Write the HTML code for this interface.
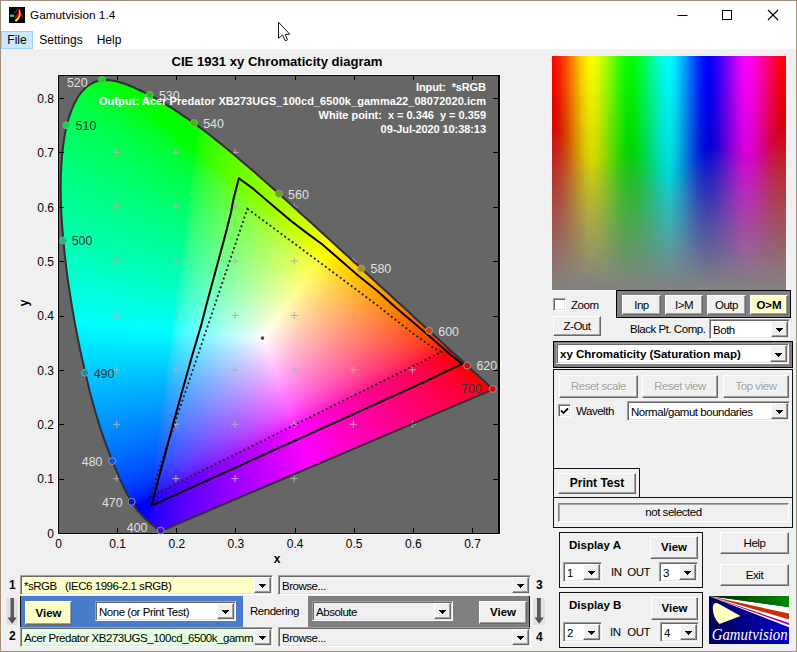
<!DOCTYPE html>
<html><head><meta charset="utf-8"><title>Gamutvision 1.4</title>
<style>
html,body{margin:0;padding:0}
body{width:797px;height:652px;overflow:hidden;background:#f0f0f0;position:relative;font-family:"Liberation Sans",sans-serif;font-size:11.5px;letter-spacing:-0.47px;color:#000}
.a{position:absolute}
#win{position:absolute;left:0;top:0;width:795px;height:650px;border:1px solid #a09078;box-sizing:content-box}
#title{position:absolute;left:1px;top:1px;width:795px;height:29px;background:#fff}
#menu{position:absolute;left:1px;top:30px;width:795px;height:19px;background:#fff}
.mi{position:absolute;top:31px;height:18px;line-height:18px;font-size:12px;box-sizing:border-box;text-align:center}
.b{position:absolute;box-sizing:border-box;background:#f0f0f0;border:1px solid;border-color:#fff #696969 #696969 #fff;box-shadow:inset -1px -1px 0 #a0a0a0;text-align:center;white-space:nowrap}
.b.y{background:#ffffc8}
.b.bold{font-weight:bold;letter-spacing:0}
.b.dis{color:#a0a0a0;text-shadow:1px 1px 0 #fff}
.s{position:absolute;box-sizing:border-box;background:#fff;border:1px solid;border-color:#a0a0a0 #fff #fff #a0a0a0;box-shadow:inset 1px 1px 0 #696969,inset -1px -1px 0 #e3e3e3;white-space:nowrap;overflow:hidden;padding-left:3px}
.s u{position:absolute;right:1px;top:1px;bottom:1px;width:17px;box-sizing:border-box;background:#f0f0f0;border:1px solid;border-color:#fff #696969 #696969 #fff;box-shadow:inset -1px -1px 0 #a0a0a0}
.s u:after{content:"";position:absolute;left:4px;top:50%;margin-top:-1px;width:7px;height:4px;background:linear-gradient(#000,#000) 0 0/7px 1px no-repeat,linear-gradient(#000,#000) 1px 1px/5px 1px no-repeat,linear-gradient(#000,#000) 2px 2px/3px 1px no-repeat,linear-gradient(#000,#000) 3px 3px/1px 1px no-repeat}
.fr{position:absolute;box-sizing:border-box;border:1px solid #111}
.t{position:absolute;white-space:nowrap}
#fill i{position:absolute;height:2px;display:block}
.wl{font-size:12.4px;fill:#e0e0e0}
.wd{font-size:12.4px;fill:#333}
.ax{font-size:12px;fill:#000}
.info{font-size:11px;font-weight:bold;fill:#fff;text-anchor:end}
svg text{letter-spacing:0}
.mi,#ttl{letter-spacing:0}
#hue i{position:absolute;left:0;width:234px;height:3px;display:block}
</style></head><body>
<div id="win"></div>
<div id="title"></div>
<div id="menu"></div>
<svg class="a" style="left:9px;top:7px" width="16" height="16" viewBox="0 0 16 16">
<rect width="16" height="16" fill="#000"/>
<path d="M5 5.500L7 5L8.500 2" stroke="#0cc" stroke-width=".7" stroke-dasharray="1 .6" fill="none"/>
<ellipse cx="3" cy="8.700" rx="2.500" ry="1.300" fill="#0cc"/><ellipse cx="3.700" cy="8.800" rx="1.400" ry=".8" fill="#999"/>
<path d="M5 10.500L8 6.500L9.500 3L10 8L8 12Z" fill="#a00000"/>
<path d="M9.500 1.500L10.200 1L12.500 6.500L14.500 11.500L12.500 9.500L11 8L8.500 12L7 13L9 8Z" fill="#f00"/>
<path d="M10.200 2L11.200 5L11.500 9L9.500 12.500L7.500 14.500L6 14L6.200 12.500L9 11L10 7Z" fill="#ff0"/>
</svg>
<div class="t" id="ttl" style="left:30px;top:7px;font-size:11.8px;line-height:16px">Gamutvision 1.4</div>
<svg class="a" style="left:670px;top:5px" width="120" height="22" viewBox="0 0 120 22">
<path d="M7.5 10.5H17.5" stroke="#000" stroke-width="1" fill="none"/>
<rect x="52.5" y="5.5" width="9" height="9" stroke="#000" stroke-width="1" fill="none"/>
<path d="M98 5L108 15M108 5L98 15" stroke="#000" stroke-width="1.1" fill="none"/>
</svg>
<div class="mi" style="left:1px;width:32px;background:#cce8ff;border:1px solid #99d1ff;line-height:16px">File</div>
<div class="mi" style="left:34px;width:54px">Settings</div>
<div class="mi" style="left:90px;width:38px">Help</div>
<svg class="a" style="left:277px;top:21px" width="14" height="21" viewBox="0 0 14 21">
<path d="M1.500 1.200L1.500 17.300L5.600 13.900L8 19.300Q9.200 20.200 10.400 19L8.300 13.400L12.700 13.200Z" fill="#fff" stroke="#181820" stroke-width="1" stroke-linejoin="round"/>
</svg>

<div class="t" id="ptitle" style="left:77px;width:400px;top:54px;text-align:center;font-weight:bold;font-size:13.1px;letter-spacing:0;line-height:16px">CIE 1931 xy Chromaticity diagram</div>
<div class="a" style="left:58px;top:75px;width:442px;height:459px;background:#666"></div>
<div id="fill"><i style="top:80px;left:94px;width:26px;background:linear-gradient(90deg,#00ff20 0px,#00ff0d 11px,#00ff00 14px,#00ff00 26px)"></i>
<i style="top:82px;left:90px;width:36px;background:linear-gradient(90deg,#00ff27 0px,#00ff11 16px,#00ff08 19px,#00ff00 20px,#00ff00 36px)"></i>
<i style="top:84px;left:86px;width:46px;background:linear-gradient(90deg,#00ff2e 0px,#00ff16 20px,#00ff05 26px,#00ff00 28px,#00ff00 46px)"></i>
<i style="top:86px;left:84px;width:52px;background:linear-gradient(90deg,#00ff32 0px,#00ff1a 22px,#00ff0b 29px,#00ff00 31px,#00ff00 52px)"></i>
<i style="top:88px;left:82px;width:59px;background:linear-gradient(90deg,#00ff35 0px,#00ff1b 26px,#00ff09 34px,#00ff00 36px,#00ff00 59px)"></i>
<i style="top:90px;left:80px;width:65px;background:linear-gradient(90deg,#00ff39 0px,#00ff20 27px,#00ff0b 38px,#00ff00 40px,#00ff00 65px)"></i>
<i style="top:92px;left:79px;width:70px;background:linear-gradient(90deg,#00ff3c 0px,#00ff1e 32px,#00ff0d 41px,#00ff00 44px,#00ff00 70px)"></i>
<i style="top:94px;left:77px;width:76px;background:linear-gradient(90deg,#00ff3f 0px,#00ff24 32px,#00ff11 44px,#00ff00 48px,#00ff00 76px)"></i>
<i style="top:96px;left:76px;width:80px;background:linear-gradient(90deg,#00ff41 0px,#00ff27 33px,#00ff12 47px,#00ff09 50px,#00ff00 52px,#00ff00 80px)"></i>
<i style="top:98px;left:75px;width:85px;background:linear-gradient(90deg,#00ff44 0px,#00ff26 37px,#00ff13 50px,#00ff06 54px,#00ff00 55px,#00ff00 85px)"></i>
<i style="top:100px;left:74px;width:89px;background:linear-gradient(90deg,#00ff46 0px,#00ff29 38px,#00ff12 54px,#00ff08 57px,#00ff00 58px,#00ff00 89px)"></i>
<i style="top:102px;left:73px;width:94px;background:linear-gradient(90deg,#00ff48 0px,#00ff2b 40px,#00ff13 57px,#00ff05 61px,#00ff00 63px,#00ff00 94px)"></i>
<i style="top:104px;left:72px;width:98px;background:linear-gradient(90deg,#00ff4b 0px,#00ff2c 42px,#00ff16 59px,#00ff08 64px,#00ff00 65px,#00ff00 98px)"></i>
<i style="top:106px;left:71px;width:102px;background:linear-gradient(90deg,#00ff4d 0px,#00ff2e 44px,#00ff15 63px,#00ff0a 67px,#00ff00 69px,#00ff00 102px)"></i>
<i style="top:108px;left:70px;width:106px;background:linear-gradient(90deg,#00ff4f 0px,#00ff31 44px,#00ff18 65px,#00ff08 71px,#00ff00 72px,#00ff00 106px)"></i>
<i style="top:110px;left:69px;width:110px;background:linear-gradient(90deg,#00ff51 0px,#00ff33 46px,#00ff19 68px,#00ff0a 74px,#00ff00 76px,#00ff00 110px)"></i>
<i style="top:112px;left:69px;width:113px;background:linear-gradient(90deg,#00ff53 0px,#00ff34 47px,#00ff1d 68px,#00ff0c 76px,#00ff00 78px,#00ff00 113px)"></i>
<i style="top:114px;left:68px;width:117px;background:linear-gradient(90deg,#00ff55 0px,#00ff35 50px,#00ff1b 73px,#00ff09 80px,#00ff00 82px,#00ff00 117px)"></i>
<i style="top:116px;left:67px;width:121px;background:linear-gradient(90deg,#00ff57 0px,#00ff38 50px,#00ff1d 75px,#00ff0b 83px,#00ff00 85px,#00ff00 121px)"></i>
<i style="top:118px;left:67px;width:124px;background:linear-gradient(90deg,#00ff58 0px,#00ff3b 49px,#00ff21 75px,#00ff0d 85px,#00ff00 88px,#00ff00 124px)"></i>
<i style="top:120px;left:66px;width:128px;background:linear-gradient(90deg,#00ff5a 0px,#00ff3d 50px,#00ff1f 80px,#00ff0b 89px,#00ff00 91px,#00ff00 128px)"></i>
<i style="top:122px;left:66px;width:131px;background:linear-gradient(90deg,#00ff5c 0px,#00ff3d 53px,#00ff21 81px,#00ff0d 91px,#00ff00 93px,#00ff00 131px)"></i>
<i style="top:124px;left:65px;width:134px;background:linear-gradient(90deg,#00ff5e 0px,#00ff3f 54px,#00ff26 81px,#00ff11 93px,#00ff00 97px,#00ff00 133px,#0cff00 134px)"></i>
<i style="top:126px;left:65px;width:137px;background:linear-gradient(90deg,#00ff5f 0px,#00ff41 54px,#00ff23 86px,#00ff0d 97px,#00ff00 99px,#00ff00 132px,#17ff00 136px,#1bff00 137px)"></i>
<i style="top:128px;left:64px;width:141px;background:linear-gradient(90deg,#00ff61 0px,#00ff42 57px,#00ff25 88px,#00ff0e 100px,#00ff00 103px,#00ff00 133px,#14ff00 136px,#24ff00 141px)"></i>
<i style="top:130px;left:64px;width:143px;background:linear-gradient(90deg,#00ff63 0px,#00ff43 58px,#00ff27 89px,#00ff10 102px,#00ff08 104px,#00ff00 105px,#00ff00 133px,#11ff00 135px,#2aff00 143px)"></i>
<i style="top:132px;left:63px;width:147px;background:linear-gradient(90deg,#00ff65 0px,#00ff43 62px,#00ff24 95px,#00ff0e 106px,#00ff00 109px,#00ff00 134px,#0cff00 135px,#23ff00 141px,#31ff00 147px)"></i>
<i style="top:134px;left:63px;width:149px;background:linear-gradient(90deg,#00ff66 0px,#00ff47 59px,#00ff2b 92px,#00ff15 106px,#00ff08 110px,#00ff00 111px,#00ff00 133px,#17ff00 137px,#34ff00 148px,#35ff00 149px)"></i>
<i style="top:136px;left:63px;width:152px;background:linear-gradient(90deg,#00ff68 0px,#00ff47 62px,#00ff2b 94px,#00ff14 109px,#00ff0a 112px,#00ff00 114px,#00ff00 133px,#14ff00 136px,#2cff00 144px,#3cff00 152px)"></i>
<i style="top:138px;left:62px;width:155px;background:linear-gradient(90deg,#00ff69 0px,#00ff49 63px,#00ff2c 97px,#00ff15 112px,#00ff07 116px,#00ff00 117px,#00ff00 134px,#11ff00 136px,#28ff00 143px,#40ff00 155px)"></i>
<i style="top:140px;left:62px;width:158px;background:linear-gradient(90deg,#00ff6b 0px,#00ff4b 63px,#00ff2c 100px,#00ff14 115px,#00ff0a 118px,#00ff02 119px,#00ff00 134px,#0dff00 135px,#24ff00 141px,#45ff00 158px)"></i>
<i style="top:142px;left:62px;width:160px;background:linear-gradient(90deg,#00ff6c 0px,#00ff4b 66px,#00ff2e 101px,#00ff15 117px,#00ff07 121px,#00ff00 122px,#00ff00 133px,#18ff00 137px,#36ff00 149px,#49ff00 160px)"></i>
<i style="top:144px;left:62px;width:163px;background:linear-gradient(90deg,#00ff6e 0px,#00ff4b 69px,#00ff2e 103px,#00ff16 119px,#00ff09 123px,#00ff00 124px,#00ff00 133px,#15ff00 136px,#31ff00 146px,#4eff00 163px)"></i>
<i style="top:146px;left:61px;width:166px;background:linear-gradient(90deg,#00ff70 0px,#00ff4d 70px,#00ff2f 106px,#00ff17 122px,#00ff06 127px,#00ff00 128px,#00ff00 134px,#11ff00 136px,#2bff00 144px,#50ff00 165px,#51ff00 166px)"></i>
<i style="top:148px;left:61px;width:169px;background:linear-gradient(90deg,#00ff71 0px,#00ff52 65px,#00ff33 105px,#00ff1a 123px,#00ff09 129px,#00ff00 130px,#00ff00 134px,#0dff00 135px,#24ff00 141px,#48ff00 159px,#56ff00 169px)"></i>
<i style="top:150px;left:61px;width:171px;background:linear-gradient(90deg,#00ff72 0px,#00ff55 63px,#00ff34 107px,#00ff1b 125px,#00ff0b 131px,#00ff00 133px,#18ff00 137px,#35ff00 148px,#59ff00 171px)"></i>
<i style="top:152px;left:61px;width:174px;background:linear-gradient(90deg,#00ff74 0px,#00ff51 73px,#00ff33 110px,#00ff1e 126px,#00ff0d 133px,#10ff00 135px,#26ff00 141px,#49ff00 159px,#5eff00 174px)"></i>
<i style="top:154px;left:61px;width:176px;background:linear-gradient(90deg,#00ff75 0px,#00ff57 66px,#00ff38 108px,#00ff1f 128px,#00ff15 133px,#11ff0f 135px,#1eff00 138px,#40ff00 153px,#61ff00 176px)"></i>
<i style="top:156px;left:60px;width:179px;background:linear-gradient(90deg,#00ff77 0px,#00ff56 72px,#00ff37 113px,#00ff1e 132px,#00ff1a 134px,#0dff18 135px,#22ff08 140px,#25ff00 141px,#47ff00 158px,#64ff00 179px)"></i>
<i style="top:158px;left:60px;width:182px;background:linear-gradient(90deg,#00ff78 0px,#00ff59 70px,#00ff38 115px,#00ff21 133px,#14ff1c 136px,#28ff0b 142px,#2dff00 144px,#51ff00 164px,#69ff00 182px)"></i>
<i style="top:160px;left:60px;width:184px;background:linear-gradient(90deg,#00ff7a 0px,#00ff59 73px,#00ff3a 115px,#00ff25 133px,#15ff20 136px,#2eff0d 144px,#32ff00 146px,#59ff00 169px,#6cff00 184px)"></i>
<i style="top:162px;left:60px;width:186px;background:linear-gradient(90deg,#00ff7b 0px,#00ff5c 71px,#00ff3c 116px,#00ff29 133px,#12ff26 135px,#2cff17 143px,#35ff0a 147px,#37ff02 148px,#60ff00 174px,#6fff00 186px)"></i>
<i style="top:164px;left:60px;width:189px;background:linear-gradient(90deg,#00ff7d 0px,#00ff5b 76px,#00ff3b 120px,#01ff2c 133px,#0dff2b 134px,#1fff25 138px,#36ff13 147px,#3dff00 151px,#67ff00 179px,#73ff00 189px)"></i>
<i style="top:166px;left:60px;width:191px;background:linear-gradient(90deg,#00ff7e 0px,#00ff5e 74px,#00ff3d 121px,#00ff31 132px,#19ff2c 136px,#34ff1c 146px,#40ff0a 152px,#42ff00 153px,#72ff00 187px,#77ff00 191px)"></i>
<i style="top:168px;left:60px;width:193px;background:linear-gradient(90deg,#00ff80 0px,#00ff5d 79px,#00ff3e 122px,#00ff34 132px,#16ff31 135px,#33ff22 145px,#42ff10 153px,#48ff00 156px,#7aff00 193px)"></i>
<i style="top:170px;left:60px;width:196px;background:linear-gradient(90deg,#00ff81 0px,#00ff60 77px,#00ff40 123px,#00ff37 132px,#0cff36 133px,#22ff30 138px,#41ff1a 152px,#4aff0a 157px,#4bff00 158px,#79ff00 192px,#7eff00 196px)"></i>
<i style="top:172px;left:59px;width:199px;background:linear-gradient(90deg,#00ff83 0px,#00ff62 78px,#00ff41 126px,#02ff3a 133px,#0eff39 134px,#26ff32 140px,#47ff19 156px,#4fff06 161px,#51ff00 162px,#81ff00 199px)"></i>
<i style="top:174px;left:59px;width:201px;background:linear-gradient(90deg,#00ff84 0px,#00ff64 78px,#00ff44 125px,#00ff3e 132px,#19ff3a 136px,#33ff2f 145px,#4bff1a 158px,#53ff09 163px,#55ff00 164px,#84ff00 201px)"></i>
<i style="top:176px;left:59px;width:204px;background:linear-gradient(90deg,#00ff86 0px,#00ff65 79px,#00ff45 127px,#00ff41 132px,#11ff3f 134px,#2dff36 142px,#4fff1b 160px,#57ff0c 165px,#5aff00 167px,#88ff00 204px)"></i>
<i style="top:178px;left:59px;width:206px;background:linear-gradient(90deg,#00ff87 0px,#00ff67 79px,#00ff45 130px,#00ff43 132px,#0cff42 133px,#22ff3d 138px,#40ff2f 151px,#57ff15 165px,#5cff09 168px,#5dff00 169px,#8bff00 206px)"></i>
<i style="top:180px;left:59px;width:208px;background:linear-gradient(90deg,#00ff88 0px,#00ff6a 77px,#00ff48 129px,#03ff46 132px,#14ff44 134px,#2eff3c 142px,#52ff23 161px,#5eff10 169px,#62ff00 172px,#8eff00 208px)"></i>
<i style="top:182px;left:59px;width:210px;background:linear-gradient(90deg,#00ff8a 0px,#00ff6a 80px,#00ff49 131px,#15ff47 134px,#2fff3f 142px,#56ff24 163px,#63ff0e 172px,#65ff00 174px,#91ff00 210px)"></i>
<i style="top:184px;left:59px;width:213px;background:linear-gradient(90deg,#00ff8b 0px,#00ff6c 80px,#00ff4c 131px,#11ff4a 133px,#28ff45 139px,#4aff34 155px,#62ff19 171px,#68ff0b 175px,#6aff00 177px,#96ff00 213px)"></i>
<i style="top:186px;left:59px;width:215px;background:linear-gradient(90deg,#00ff8d 0px,#00ff6b 85px,#00ff4e 131px,#13ff4c 133px,#2eff45 141px,#56ff2e 162px,#68ff15 175px,#6cff08 178px,#6eff00 179px,#99ff00 215px)"></i>
<i style="top:188px;left:59px;width:217px;background:linear-gradient(90deg,#00ff8e 0px,#00ff6f 81px,#00ff51 130px,#03ff50 131px,#14ff4f 133px,#2fff48 141px,#55ff33 161px,#69ff1b 175px,#70ff0b 180px,#71ff00 181px,#9cff00 217px)"></i>
<i style="top:190px;left:59px;width:219px;background:linear-gradient(90deg,#00ff90 0px,#00ff6d 89px,#00ff53 130px,#16ff51 133px,#30ff4b 141px,#59ff34 163px,#6cff1d 177px,#73ff0d 182px,#76ff00 184px,#9fff00 219px)"></i>
<i style="top:192px;left:59px;width:222px;background:linear-gradient(90deg,#00ff91 0px,#00ff72 82px,#00ff56 130px,#12ff54 132px,#2eff4e 140px,#55ff3b 160px,#70ff1e 179px,#78ff0a 185px,#79ff00 186px,#a3ff00 222px)"></i>
<i style="top:194px;left:59px;width:224px;background:linear-gradient(90deg,#00ff93 0px,#00ff71 88px,#00ff58 130px,#0dff57 131px,#23ff54 136px,#40ff4a 148px,#6aff2c 174px,#78ff15 185px,#7dff00 189px,#a7ff00 224px)"></i>
<i style="top:196px;left:59px;width:226px;background:linear-gradient(90deg,#00ff94 0px,#00ff73 88px,#00ff5b 129px,#04ff5a 130px,#15ff59 132px,#32ff52 141px,#58ff40 161px,#74ff24 181px,#7eff0f 189px,#81ff00 191px,#aaff00 226px)"></i>
<i style="top:198px;left:59px;width:228px;background:linear-gradient(90deg,#00ff95 0px,#00ff77 83px,#00ff5d 129px,#16ff5b 132px,#33ff55 141px,#5aff42 162px,#76ff27 182px,#82ff11 191px,#85ff00 194px,#adff00 228px)"></i>
<i style="top:200px;left:59px;width:231px;background:linear-gradient(90deg,#00ff97 0px,#00ff76 89px,#00ff5f 129px,#12ff5e 131px,#29ff5a 137px,#4eff4c 154px,#72ff32 178px,#82ff19 191px,#87ff09 195px,#89ff00 196px,#b1ff00 231px)"></i>
<i style="top:202px;left:59px;width:233px;background:linear-gradient(90deg,#00ff98 0px,#00ff79 87px,#00ff62 129px,#0dff61 130px,#24ff5e 135px,#45ff53 149px,#72ff36 178px,#86ff1b 193px,#8bff0c 197px,#8dff00 199px,#b5ff00 233px)"></i>
<i style="top:204px;left:60px;width:234px;background:linear-gradient(90deg,#00ff9a 0px,#00ff78 92px,#00ff64 127px,#04ff64 128px,#15ff63 130px,#30ff5d 138px,#56ff4e 157px,#7bff31 183px,#8aff19 195px,#8fff09 199px,#91ff00 200px,#b8ff00 234px)"></i>
<i style="top:206px;left:60px;width:236px;background:linear-gradient(90deg,#00ff9b 0px,#00ff7c 87px,#00ff67 127px,#16ff65 130px,#31ff5f 138px,#55ff52 156px,#7fff32 185px,#8fff18 198px,#93ff0c 201px,#94ff03 202px,#9bff00 208px,#bbff00 236px)"></i>
<i style="top:208px;left:60px;width:238px;background:linear-gradient(90deg,#00ff9c 0px,#00ff80 82px,#00ff69 127px,#12ff68 129px,#2dff63 136px,#52ff56 154px,#7fff36 185px,#91ff1c 199px,#96ff0e 203px,#98ff00 205px,#bfff00 238px)"></i>
<i style="top:210px;left:60px;width:241px;background:linear-gradient(90deg,#00ff9e 0px,#00ff7e 91px,#00ff6b 127px,#0dff6a 128px,#21ff68 132px,#40ff60 144px,#69ff4c 168px,#88ff31 191px,#97ff18 203px,#9bff0b 206px,#9cff00 207px,#c3ff00 241px)"></i>
<i style="top:212px;left:60px;width:243px;background:linear-gradient(90deg,#00ff9f 0px,#00ff82 86px,#00ff6e 126px,#1aff6b 130px,#34ff66 138px,#5eff56 160px,#86ff38 189px,#98ff1f 203px,#9eff0e 208px,#a0ff00 210px,#c7ff00 243px)"></i>
<i style="top:214px;left:60px;width:245px;background:linear-gradient(90deg,#00ffa1 0px,#00ff82 90px,#00ff70 126px,#17ff6e 129px,#37ff68 139px,#60ff58 161px,#8aff39 191px,#9dff1e 206px,#a3ff0b 211px,#a4ff00 212px,#caff00 245px)"></i>
<i style="top:216px;left:60px;width:247px;background:linear-gradient(90deg,#00ffa2 0px,#00ff86 85px,#00ff72 126px,#13ff71 128px,#2aff6d 134px,#49ff65 147px,#7fff47 182px,#99ff2c 202px,#a5ff13 212px,#a8ff00 215px,#ceff00 247px)"></i>
<i style="top:218px;left:60px;width:249px;background:linear-gradient(90deg,#00ffa4 0px,#00ff85 92px,#00ff74 126px,#0eff73 127px,#25ff71 132px,#45ff69 145px,#72ff54 172px,#95ff37 198px,#a6ff1b 212px,#abff0b 216px,#acff00 217px,#d2ff00 249px)"></i>
<i style="top:220px;left:60px;width:252px;background:linear-gradient(90deg,#00ffa5 0px,#00ff89 87px,#00ff77 125px,#05ff76 126px,#16ff75 128px,#32ff70 136px,#5cff63 157px,#92ff3f 195px,#a7ff22 212px,#aeff0e 218px,#b1ff00 220px,#d7ff00 252px)"></i>
<i style="top:222px;left:60px;width:254px;background:linear-gradient(90deg,#00ffa7 0px,#00ff88 94px,#00ff79 125px,#17ff77 128px,#33ff73 136px,#5dff65 157px,#90ff45 193px,#a9ff26 213px,#b2ff10 220px,#b4ff00 222px,#daff00 254px)"></i>
<i style="top:224px;left:61px;width:255px;background:linear-gradient(90deg,#00ffa8 0px,#00ff8b 90px,#00ff7b 124px,#13ff7a 126px,#2bff77 132px,#4eff6e 147px,#84ff52 182px,#a2ff37 205px,#b2ff1d 218px,#b7ff0d 222px,#b9ff00 224px,#deff00 255px)"></i>
<i style="top:226px;left:61px;width:257px;background:linear-gradient(90deg,#00ffaa 0px,#00ff8a 97px,#00ff7d 124px,#0eff7d 125px,#26ff7a 130px,#4bff71 145px,#7eff5a 177px,#a4ff3a 206px,#b5ff1e 220px,#bbff0a 225px,#bdff00 226px,#e2ff00 257px)"></i>
<i style="top:228px;left:61px;width:259px;background:linear-gradient(90deg,#00ffab 0px,#00ff8e 92px,#00ff80 123px,#05ff7f 124px,#16ff7e 126px,#33ff7a 134px,#61ff6c 157px,#9aff49 197px,#b3ff2b 217px,#bdff16 225px,#bfff0d 227px,#c0ff03 228px,#c8ff00 234px,#e6ff00 259px)"></i>
<i style="top:230px;left:61px;width:262px;background:linear-gradient(90deg,#00ffad 0px,#00ff8f 94px,#00ff82 123px,#18ff80 126px,#33ff7c 134px,#5dff70 154px,#98ff4f 195px,#b5ff2f 218px,#c0ff18 227px,#c4ff09 230px,#c5ff00 231px,#ebff00 262px)"></i>
<i style="top:232px;left:61px;width:264px;background:linear-gradient(90deg,#00ffae 0px,#00ff93 89px,#00ff84 123px,#13ff83 125px,#29ff80 130px,#4fff77 146px,#82ff61 178px,#aaff43 208px,#beff28 224px,#c7ff12 231px,#c8ff0d 232px,#c9ff00 233px,#efff00 264px)"></i>
<i style="top:234px;left:61px;width:266px;background:linear-gradient(90deg,#00ffb0 0px,#00ff91 99px,#00ff86 123px,#0eff86 124px,#23ff84 128px,#41ff7e 139px,#6dff6f 163px,#a3ff4e 202px,#bfff2d 224px,#c9ff18 232px,#cdff08 235px,#ceff00 236px,#f4ff00 266px)"></i>
<i style="top:236px;left:61px;width:268px;background:linear-gradient(90deg,#00ffb2 0px,#00ff92 101px,#00ff89 122px,#1cff87 126px,#39ff82 135px,#61ff77 155px,#a0ff54 199px,#beff36 222px,#ccff1e 233px,#d1ff0c 237px,#d2ff00 238px,#f8ff00 268px)"></i>
<i style="top:238px;left:62px;width:269px;background:linear-gradient(90deg,#00ffb3 0px,#00ff95 98px,#00ff8b 121px,#18ff89 124px,#34ff85 132px,#5eff7a 152px,#9bff5c 193px,#bdff3e 219px,#ceff22 233px,#d5ff0f 238px,#d7ff00 240px,#fcff00 269px)"></i>
<i style="top:240px;left:62px;width:272px;background:linear-gradient(90deg,#00ffb5 0px,#00ff94 105px,#00ff8d 121px,#14ff8c 123px,#33ff88 131px,#61ff7c 153px,#a1ff5b 197px,#c1ff3f 221px,#d4ff21 236px,#d9ff12 240px,#daff0c 241px,#dbff00 242px,#fffe00 271px,#fffc00 272px)"></i>
<i style="top:242px;left:62px;width:274px;background:linear-gradient(90deg,#00ffb6 0px,#00ff9a 95px,#00ff8f 121px,#0fff8e 122px,#27ff8c 127px,#49ff86 140px,#7aff75 168px,#aeff56 206px,#cdff35 230px,#dcff19 241px,#e1ff00 245px,#fffd00 270px,#fff800 274px)"></i>
<i style="top:244px;left:62px;width:276px;background:linear-gradient(90deg,#00ffb8 0px,#00ff9a 100px,#00ff92 120px,#17ff90 123px,#32ff8d 130px,#5aff84 148px,#96ff6a 187px,#c2ff49 220px,#d8ff2c 237px,#e2ff12 245px,#e5ff00 247px,#fffe00 268px,#fff400 276px)"></i>
<i style="top:246px;left:62px;width:278px;background:linear-gradient(90deg,#00ffb9 0px,#00ff9f 92px,#00ff94 120px,#19ff92 123px,#35ff8f 131px,#59ff87 147px,#97ff6d 187px,#c6ff4a 222px,#ddff2b 240px,#e6ff14 247px,#eaff00 250px,#fffd00 267px,#ffef00 278px)"></i>
<i style="top:248px;left:63px;width:279px;background:linear-gradient(90deg,#00ffbb 0px,#00ff9d 102px,#00ff96 119px,#0dff95 120px,#23ff94 124px,#43ff8e 135px,#72ff81 160px,#b1ff60 204px,#d3ff41 230px,#e5ff25 244px,#ecff12 249px,#efff00 251px,#fffd00 265px,#ffeb00 279px)"></i>
<i style="top:250px;left:63px;width:282px;background:linear-gradient(90deg,#00ffbc 0px,#00ffa2 94px,#00ff98 119px,#0fff98 120px,#28ff95 125px,#4aff8f 138px,#79ff81 164px,#b9ff5f 209px,#ddff3c 236px,#ecff20 248px,#f2ff0e 252px,#f3ff04 253px,#f6ff00 255px,#fffc00 264px,#ffe600 282px)"></i>
<i style="top:252px;left:63px;width:284px;background:linear-gradient(90deg,#00ffbe 0px,#00ffa2 100px,#00ff9b 118px,#1dff99 122px,#40ff94 133px,#72ff87 159px,#b7ff64 207px,#dbff44 234px,#eeff28 248px,#f6ff11 254px,#f9ff00 256px,#fffa00 264px,#ffe200 284px)"></i>
<i style="top:254px;left:63px;width:286px;background:linear-gradient(90deg,#00ffc0 0px,#00ffa2 105px,#00ff9d 118px,#19ff9b 121px,#36ff98 129px,#5eff8f 147px,#9dff77 187px,#ceff57 223px,#ebff37 244px,#f8ff1d 254px,#fcff0e 257px,#feff00 258px,#ffde00 286px)"></i>
<i style="top:256px;left:63px;width:288px;background:linear-gradient(90deg,#00ffc1 0px,#00ffa8 94px,#00ff9f 118px,#15ff9e 120px,#2eff9c 126px,#51ff95 140px,#87ff85 171px,#c8ff61 217px,#eaff40 242px,#faff26 254px,#fffd11 259px,#fffa00 261px,#ffda00 288px)"></i>
<i style="top:258px;left:64px;width:289px;background:linear-gradient(90deg,#00ffc3 0px,#00ffa6 105px,#00ffa1 117px,#0fffa1 118px,#25ff9f 122px,#4aff99 135px,#7dff8b 163px,#c0ff6b 209px,#e6ff4b 237px,#fcff2d 253px,#fff814 260px,#fff70d 261px,#fff600 262px,#ffd600 289px)"></i>
<i style="top:260px;left:64px;width:291px;background:linear-gradient(90deg,#00ffc5 0px,#00ffa8 105px,#00ffa4 116px,#18ffa2 119px,#30ffa0 125px,#57ff99 141px,#8fff88 174px,#d2ff63 221px,#f4ff41 246px,#fffc2b 256px,#fff416 262px,#fff000 265px,#ffd200 291px)"></i>
<i style="top:262px;left:64px;width:294px;background:linear-gradient(90deg,#00ffc6 0px,#00ffac 100px,#00ffa6 116px,#1affa5 119px,#37ffa1 127px,#60ff9a 145px,#a5ff81 188px,#dbff60 227px,#fdff3d 251px,#fff220 262px,#ffed0c 266px,#ffeb00 267px,#ffcd00 294px)"></i>
<i style="top:264px;left:64px;width:296px;background:linear-gradient(90deg,#00ffc8 0px,#00ffad 103px,#00ffa8 116px,#15ffa7 118px,#2fffa5 124px,#57ff9e 140px,#93ff8c 175px,#cfff6d 217px,#f5ff4e 244px,#fffc3e 253px,#ffec1d 265px,#ffe80f 268px,#ffe600 270px,#ffc900 296px)"></i>
<i style="top:266px;left:65px;width:297px;background:linear-gradient(90deg,#00ffc9 0px,#00ffaf 103px,#00ffaa 115px,#10ffaa 116px,#26ffa8 120px,#4bffa3 133px,#7eff97 160px,#caff75 211px,#f6ff54 242px,#fffd47 250px,#ffe81f 266px,#ffe30b 270px,#ffe200 271px,#ffc600 297px)"></i>
<i style="top:268px;left:65px;width:299px;background:linear-gradient(90deg,#00ffcb 0px,#00ffb1 103px,#00ffad 114px,#19ffac 117px,#34ffa9 124px,#5bffa3 140px,#9dff8f 179px,#dfff6c 225px,#fffe4f 248px,#ffe626 266px,#ffdf0f 272px,#ffdc00 274px,#ffc200 299px)"></i>
<i style="top:270px;left:65px;width:301px;background:linear-gradient(90deg,#00ffcd 0px,#00ffb2 107px,#00ffaf 114px,#14ffae 116px,#2fffac 122px,#51ffa7 135px,#85ff9a 163px,#ceff7b 212px,#ffff57 246px,#ffe32a 267px,#ffda11 274px,#ffd800 276px,#ffbe00 301px)"></i>
<i style="top:272px;left:65px;width:304px;background:linear-gradient(90deg,#00ffcf 0px,#00ffb3 110px,#00ffb1 114px,#0effb1 115px,#25ffb0 119px,#49ffab 131px,#79ffa1 155px,#c9ff82 207px,#fcff61 242px,#fff14b 254px,#ffdd28 270px,#ffd613 276px,#ffd300 279px,#ffba00 304px)"></i>
<i style="top:274px;left:66px;width:305px;background:linear-gradient(90deg,#00ffd0 0px,#00ffb7 104px,#00ffb4 113px,#10ffb3 114px,#26ffb2 118px,#45ffae 128px,#73ffa5 150px,#c4ff88 202px,#fcff66 240px,#fff151 252px,#ffd929 271px,#ffd110 278px,#ffcf00 280px,#ffb600 305px)"></i>
<i style="top:276px;left:66px;width:307px;background:linear-gradient(90deg,#00ffd2 0px,#00ffb9 105px,#00ffb6 112px,#1fffb5 116px,#3effb2 125px,#69ffaa 144px,#b4ff93 190px,#efff74 230px,#fffd67 242px,#ffd62c 272px,#ffcd13 280px,#ffcc0d 281px,#ffcb01 282px,#ffb200 307px)"></i>
<i style="top:278px;left:66px;width:309px;background:linear-gradient(90deg,#00ffd4 0px,#00ffba 109px,#00ffb9 112px,#14ffb8 114px,#2dffb6 119px,#53ffb1 133px,#88ffa6 161px,#dbff85 215px,#fffe6d 240px,#ffd432 272px,#ffc914 282px,#ffc708 284px,#ffc600 285px,#ffaf00 309px)"></i>
<i style="top:280px;left:66px;width:311px;background:linear-gradient(90deg,#00ffd6 0px,#00ffbc 110px,#00ffbb 112px,#0effbb 113px,#26ffb9 117px,#46ffb6 127px,#78ffad 151px,#d5ff8c 210px,#fffd72 239px,#ffce30 275px,#ffc516 284px,#ffc30c 286px,#ffc200 287px,#ffab00 311px)"></i>
<i style="top:282px;left:67px;width:312px;background:linear-gradient(90deg,#00ffd7 0px,#00ffbf 107px,#02ffbd 111px,#11ffbd 112px,#27ffbc 116px,#47ffb8 126px,#79ffaf 150px,#d4ff91 207px,#fffe78 236px,#ffcf39 272px,#ffc21b 284px,#ffbf0f 287px,#ffbd00 289px,#ffa800 312px)"></i>
<i style="top:284px;left:67px;width:315px;background:linear-gradient(90deg,#00ffd9 0px,#00ffc1 108px,#00ffc0 110px,#1affbf 113px,#3affbd 121px,#67ffb6 140px,#acffa4 180px,#f6ff84 228px,#fffc7b 236px,#ffce3f 271px,#ffbe1d 286px,#ffba0b 290px,#ffb900 291px,#ffa300 315px)"></i>
<i style="top:286px;left:67px;width:317px;background:linear-gradient(90deg,#00ffdb 0px,#00ffc3 110px,#15ffc2 112px,#2dffc0 117px,#50ffbc 129px,#86ffb2 156px,#dfff94 212px,#fffe83 233px,#ffcd45 270px,#ffbb21 287px,#ffb60e 292px,#ffb400 294px,#ffa000 317px)"></i>
<i style="top:288px;left:68px;width:318px;background:linear-gradient(90deg,#00ffdd 0px,#00ffc5 109px,#0fffc5 110px,#27ffc3 114px,#4affc0 125px,#80ffb7 151px,#dfff98 210px,#fffd87 231px,#ffcb49 269px,#ffb61f 289px,#ffb210 293px,#ffb000 295px,#ff9c00 318px)"></i>
<i style="top:290px;left:68px;width:320px;background:linear-gradient(90deg,#00ffdf 0px,#00ffc8 108px,#03ffc7 109px,#11ffc7 110px,#28ffc6 114px,#4bffc2 125px,#83ffb9 152px,#e3ff9b 211px,#fffd8c 230px,#ffcf55 264px,#ffb528 288px,#ffae12 295px,#ffac00 298px,#ff9800 320px)"></i>
<i style="top:292px;left:68px;width:322px;background:linear-gradient(90deg,#00ffe1 0px,#00ffca 108px,#14ffca 110px,#31ffc8 116px,#58ffc3 130px,#94ffb8 161px,#edff9b 216px,#fffe91 228px,#ffcf5b 262px,#ffb129 290px,#ffaa10 298px,#ffa800 300px,#ff9500 322px)"></i>
<i style="top:294px;left:68px;width:325px;background:linear-gradient(90deg,#00ffe3 0px,#00ffcd 108px,#16ffcc 110px,#2effcb 115px,#52ffc7 127px,#92ffbc 159px,#f6ff9c 220px,#fffd96 227px,#ffcd5e 262px,#ffae2c 291px,#ffa612 300px,#ffa403 302px,#ff9f00 308px,#ff9100 325px)"></i>
<i style="top:296px;left:69px;width:326px;background:linear-gradient(90deg,#00ffe5 0px,#00ffcf 107px,#0fffcf 108px,#23ffce 111px,#46ffcb 121px,#73ffc5 141px,#c4ffb2 187px,#fffe9b 224px,#ffd168 256px,#ffad32 289px,#ffa317 300px,#ffa009 303px,#ff9f00 304px,#ff8d00 326px)"></i>
<i style="top:298px;left:69px;width:328px;background:linear-gradient(90deg,#00ffe6 0px,#00ffd2 106px,#04ffd2 107px,#12ffd1 108px,#2dffd0 113px,#54ffcc 126px,#88ffc4 151px,#ebffa9 210px,#fffd9f 223px,#ffcb67 259px,#ffa72d 294px,#ff9e15 303px,#ff9d0c 305px,#ff9c01 306px,#ff8900 328px)"></i>
<i style="top:300px;left:69px;width:330px;background:linear-gradient(90deg,#00ffe8 0px,#00ffd4 106px,#1bffd4 109px,#39ffd2 116px,#61ffce 131px,#a4ffc2 166px,#feffa6 220px,#ffca6b 258px,#ffa531 294px,#ff9b17 305px,#ff9700 309px,#ff8600 330px)"></i>
<i style="top:302px;left:70px;width:331px;background:linear-gradient(90deg,#00ffea 0px,#00ffd7 105px,#16ffd7 107px,#30ffd5 112px,#59ffd1 126px,#9bffc7 159px,#ffffab 218px,#ffce75 252px,#ffa030 296px,#ff9718 306px,#ff940b 309px,#ff9300 310px,#ff8200 331px)"></i>
<i style="top:304px;left:70px;width:334px;background:linear-gradient(90deg,#00ffec 0px,#00ffda 105px,#10ffd9 106px,#29ffd8 110px,#50ffd5 122px,#88ffce 148px,#fcffb1 215px,#ffee9e 227px,#ffbd64 265px,#ff9a2d 300px,#ff9112 310px,#ff8f00 313px,#ff7e00 334px)"></i>
<i style="top:306px;left:70px;width:336px;background:linear-gradient(90deg,#00ffee 0px,#00ffdd 104px,#04ffdc 105px,#12ffdc 106px,#2affdb 110px,#4bffd9 120px,#7effd3 142px,#f9ffb6 212px,#fffcb1 217px,#ffcb7b 251px,#ff9831 300px,#ff8e14 312px,#ff8c0a 314px,#ff8b00 315px,#ff7a00 336px)"></i>
<i style="top:308px;left:71px;width:337px;background:linear-gradient(90deg,#00fff0 0px,#00ffdf 103px,#1cffdf 106px,#3effdd 114px,#6affd8 131px,#b3ffcc 169px,#fffdb7 214px,#ffcb80 248px,#ff9533 300px,#ff8b19 312px,#ff8706 316px,#ff8700 317px,#ff7700 337px)"></i>
<i style="top:310px;left:71px;width:339px;background:linear-gradient(90deg,#00fff3 0px,#00ffe2 103px,#17ffe1 105px,#35ffe0 111px,#60ffdd 126px,#aaffd2 163px,#fffebd 212px,#ffca84 247px,#ff9337 300px,#ff8617 315px,#ff840a 318px,#ff8300 319px,#ff7300 339px)"></i>
<i style="top:312px;left:71px;width:341px;background:linear-gradient(90deg,#00fff5 0px,#00ffe5 103px,#10ffe4 104px,#2affe4 108px,#52ffe1 120px,#87ffdb 144px,#ffffc2 210px,#ffc988 246px,#ff8d34 304px,#ff8218 317px,#ff7f05 321px,#ff7e00 323px,#ff6f00 341px)"></i>
<i style="top:314px;left:72px;width:342px;background:linear-gradient(90deg,#00fff7 0px,#00ffe8 101px,#05ffe7 102px,#13ffe7 103px,#2bffe6 107px,#4dffe4 117px,#81ffdf 139px,#feffc7 207px,#ffc88b 244px,#ff9244 295px,#ff8121 315px,#ff7c0f 321px,#ff7b00 323px,#ff6c00 342px)"></i>
<i style="top:316px;left:72px;width:345px;background:linear-gradient(90deg,#00fff9 0px,#00ffea 101px,#1dffea 104px,#3cffe8 111px,#68ffe5 127px,#baffda 168px,#fffeca 207px,#ffd39c 234px,#ff9e5c 280px,#ff822c 312px,#ff7914 322px,#ff780c 324px,#ff7703 325px,#ff7200 331px,#ff6700 345px)"></i>
<i style="top:318px;left:72px;width:347px;background:linear-gradient(90deg,#00fffb 0px,#00ffed 101px,#17ffed 103px,#32ffec 108px,#5bffe9 121px,#9affe2 150px,#ffffd0 205px,#ffd2a0 233px,#ff9f63 277px,#ff7d2b 315px,#ff7512 325px,#ff7200 328px,#ff6300 347px)"></i>
<i style="top:320px;left:73px;width:348px;background:linear-gradient(90deg,#00fffd 0px,#00fff0 100px,#11fff0 101px,#2bffef 105px,#54ffed 117px,#8dffe8 142px,#fffed4 203px,#ffcea0 233px,#ff985f 281px,#ff7a2d 315px,#ff7114 326px,#ff6f0b 328px,#ff6e01 329px,#ff5f00 348px)"></i>
<i style="top:322px;left:73px;width:350px;background:linear-gradient(90deg,#00ffff 0px,#00fff3 99px,#06fff3 100px,#14fff3 101px,#31fff2 106px,#60ffef 121px,#a3ffe8 152px,#fffdd8 202px,#ffcca2 233px,#ff9c69 275px,#ff7831 315px,#ff6d15 328px,#ff6a00 332px,#ff5b00 350px)"></i>
<i style="top:324px;left:74px;width:351px;background:linear-gradient(90deg,#00fcff 0px,#00fff9 81px,#00fff6 98px,#16fff6 100px,#32fff5 105px,#59fff3 117px,#94ffee 143px,#fffedd 199px,#ffcfaa 228px,#ff9a6c 273px,#ff7432 316px,#ff6916 329px,#ff660a 332px,#ff6600 333px,#ff5700 351px)"></i>
<i style="top:326px;left:74px;width:354px;background:linear-gradient(90deg,#00faff 0px,#00fffc 80px,#00fff9 98px,#18fff9 100px,#33fff8 105px,#55fff6 115px,#96fff1 143px,#ffffe3 197px,#ffccac 228px,#ff956b 276px,#ff7032 318px,#ff6518 331px,#ff6206 335px,#ff6100 336px,#ff5200 354px)"></i>
<i style="top:328px;left:74px;width:356px;background:linear-gradient(90deg,#00f8ff 0px,#00fffc 98px,#12fffc 99px,#2cfffb 103px,#50fffa 113px,#89fff6 136px,#fffee7 196px,#ffcdb1 226px,#ff9c78 267px,#ff6c34 319px,#ff6016 334px,#ff5e0a 337px,#ff5d00 338px,#ff4e00 356px)"></i>
<i style="top:330px;left:75px;width:357px;background:linear-gradient(90deg,#00f6ff 0px,#00ffff 96px,#06ffff 97px,#14ffff 98px,#2dfffe 102px,#4efffd 111px,#7dfffa 129px,#fffeeb 194px,#ffd0b9 221px,#ff9f81 261px,#ff6936 319px,#ff5d1a 334px,#ff590c 338px,#ff5800 340px,#ff4a00 357px)"></i>
<i style="top:332px;left:75px;width:359px;background:linear-gradient(90deg,#00f4ff 0px,#00fcff 96px,#1efcff 99px,#3ffdff 106px,#73ffff 124px,#cbfff7 166px,#fffdef 193px,#ffcdbb 221px,#ff967b 267px,#ff6435 322px,#ff5818 337px,#ff5409 341px,#ff5300 342px,#ff4500 359px)"></i>
<i style="top:334px;left:75px;width:361px;background:linear-gradient(90deg,#00f1ff 0px,#00f9ff 96px,#0ff9ff 97px,#2af9ff 101px,#4dfaff 110px,#88fdff 133px,#fefff6 190px,#ffc8ba 223px,#ff9680 265px,#ff5f34 325px,#ff5216 340px,#ff500c 343px,#ff4e00 345px,#ff4000 361px)"></i>
<i style="top:336px;left:76px;width:362px;background:linear-gradient(90deg,#00efff 0px,#00f6ff 95px,#11f6ff 96px,#26f6ff 99px,#4af7ff 108px,#83f9ff 130px,#fbfffc 186px,#fff9f5 191px,#ffcac0 219px,#ff9b8b 257px,#ff5c37 324px,#ff4e18 341px,#ff4a08 345px,#ff4900 346px,#ff3b00 362px)"></i>
<i style="top:338px;left:76px;width:365px;background:linear-gradient(90deg,#00edff 0px,#00f3ff 94px,#06f3ff 95px,#14f3ff 96px,#2cf3ff 100px,#4df4ff 109px,#83f6ff 130px,#fffcfd 188px,#ffcdc9 215px,#ff9d92 253px,#ff6146 315px,#ff4c20 340px,#ff460b 347px,#ff4400 349px,#ff3500 365px)"></i>
<i style="top:340px;left:77px;width:366px;background:linear-gradient(90deg,#00ebff 0px,#00f0ff 93px,#16f0ff 95px,#32f0ff 100px,#64f1ff 116px,#c9f6ff 162px,#fff9ff 187px,#ffcaca 214px,#ff9790 255px,#ff5338 327px,#ff4317 345px,#ff4008 349px,#ff3f00 350px,#ff2f00 366px)"></i>
<i style="top:342px;left:77px;width:368px;background:linear-gradient(90deg,#00e9ff 0px,#00edff 93px,#0fedff 94px,#2aedff 98px,#54eeff 110px,#96f0ff 138px,#fff4fe 188px,#ffc8cc 214px,#ff9996 251px,#ff5948 317px,#ff4221 343px,#ff3b0f 350px,#ff3901 352px,#ff2800 368px)"></i>
<i style="top:344px;left:77px;width:370px;background:linear-gradient(90deg,#00e7ff 0px,#00eaff 93px,#11eaff 94px,#2beaff 98px,#54ebff 110px,#93ecff 137px,#ffeffd 189px,#ffbcc4 220px,#ff8888 264px,#ff4633 335px,#ff3714 351px,#ff3200 355px,#ff2000 370px)"></i>
<i style="top:346px;left:78px;width:371px;background:linear-gradient(90deg,#00e5ff 0px,#00e7ff 91px,#07e7ff 92px,#14e7ff 93px,#30e7ff 98px,#5fe8ff 113px,#b4eaff 152px,#ffeafd 189px,#ffbbc7 218px,#ff868a 263px,#ff4133 336px,#ff3218 351px,#ff2d0a 355px,#ff2c00 356px,#ff1700 371px)"></i>
<i style="top:348px;left:78px;width:374px;background:linear-gradient(90deg,#00e3ff 0px,#00e4ff 91px,#16e4ff 93px,#31e4ff 98px,#5ae5ff 111px,#a9e6ff 147px,#ffe7ff 189px,#ffbbcc 216px,#ff8892 258px,#ff3b32 339px,#ff2a16 354px,#ff2506 358px,#ff2400 359px,#ff0d00 371px,#ff0000 374px)"></i>
<i style="top:350px;left:79px;width:375px;background:linear-gradient(90deg,#00e0ff 0px,#00e1ff 90px,#18e1ff 92px,#35e1ff 98px,#5fe2ff 112px,#ace2ff 148px,#ffe3fe 189px,#ffb4c9 218px,#ff7f8b 264px,#ff3634 339px,#ff2217 355px,#ff1c09 359px,#ff1b00 360px,#ff0a00 367px,#ff0000 369px,#ff0000 375px)"></i>
<i style="top:352px;left:79px;width:377px;background:linear-gradient(90deg,#00deff 0px,#00dfff 90px,#11dfff 91px,#2adfff 95px,#4cdfff 105px,#81dfff 127px,#ffdefd 190px,#ffadc6 221px,#ff7b8c 265px,#ff2e33 342px,#ff1716 358px,#ff0a00 363px,#ff0000 365px,#ff0000 377px)"></i>
<i style="top:354px;left:80px;width:378px;background:linear-gradient(90deg,#00dcff 0px,#00dcff 88px,#21dcff 92px,#41dcff 100px,#78dcff 122px,#ffd9fd 190px,#ffacc9 219px,#ff768b 266px,#ff2a36 341px,#ff101e 356px,#ff0014 360px,#ff0008 363px,#ff0000 364px,#ff0000 378px)"></i>
<i style="top:356px;left:80px;width:380px;background:linear-gradient(90deg,#00daff 0px,#00d9ff 88px,#1cd9ff 91px,#37d9ff 97px,#5fd9ff 111px,#a7d8ff 145px,#ffd6fe 190px,#ffa5c6 222px,#ff6e87 271px,#ff2a3e 337px,#ff132a 351px,#ff0022 356px,#ff000f 364px,#ff0000 367px,#ff0000 380px)"></i>
<i style="top:358px;left:80px;width:383px;background:linear-gradient(90deg,#00d8ff 0px,#00d6ff 88px,#17d6ff 90px,#34d6ff 96px,#5dd6ff 110px,#b2d4ff 151px,#ffd1fe 191px,#ffa4c9 221px,#ff7190 265px,#ff2944 334px,#ff1032 348px,#ff002c 352px,#ff0014 365px,#ff0008 368px,#ff0000 369px,#ff0000 383px)"></i>
<i style="top:360px;left:81px;width:384px;background:linear-gradient(90deg,#00d6ff 0px,#00d4ff 87px,#11d4ff 88px,#29d3ff 92px,#4ed3ff 103px,#8cd2ff 131px,#ffccfd 191px,#ff9dc6 223px,#ff698c 269px,#ff2c4d 327px,#ff133c 342px,#ff0035 347px,#ff001a 364px,#ff000a 369px,#ff0000 371px,#ff0000 384px)"></i>
<i style="top:362px;left:81px;width:386px;background:linear-gradient(90deg,#00d4ff 0px,#00d1ff 86px,#1ad1ff 89px,#36d1ff 95px,#64d0ff 112px,#bacdff 155px,#ffc9ff 191px,#ff9ecc 220px,#ff6991 266px,#ff2b53 324px,#ff1042 339px,#ff003d 343px,#ff001d 365px,#ff000c 371px,#ff0000 373px,#ff0000 386px)"></i>
<i style="top:364px;left:82px;width:387px;background:linear-gradient(90deg,#00d2ff 0px,#00ceff 85px,#1cceff 88px,#3aceff 95px,#66cdff 112px,#bdc9ff 156px,#ffc4fe 191px,#ff95c6 224px,#ff5b86 276px,#ff2756 322px,#ff1049 334px,#ff0947 336px,#ff0145 337px,#ff0023 363px,#ff000e 372px,#ff0001 374px,#ff0000 387px)"></i>
<i style="top:366px;left:82px;width:389px;background:linear-gradient(90deg,#00d0ff 0px,#00ccff 85px,#17ccff 87px,#30cbff 92px,#5bcaff 107px,#b3c6ff 151px,#ffc0fe 192px,#ff93c9 223px,#ff5b8b 273px,#ff265b 319px,#ff104f 330px,#ff094d 332px,#ff004c 333px,#ff0025 364px,#ff0010 374px,#ff0000 377px,#ff0000 389px)"></i>
<i style="top:368px;left:83px;width:390px;background:linear-gradient(90deg,#00ceff 0px,#00c9ff 84px,#11c9ff 85px,#28c9ff 89px,#49c8ff 99px,#79c6ff 120px,#ffbbfd 192px,#ff8dc8 224px,#ff588e 271px,#ff2963 312px,#ff1056 325px,#ff0954 327px,#ff0053 328px,#ff0026 365px,#ff000e 376px,#ff0000 378px,#ff0000 390px)"></i>
<i style="top:370px;left:83px;width:393px;background:linear-gradient(90deg,#00ccff 0px,#00c6ff 83px,#1ac6ff 86px,#38c6ff 93px,#64c4ff 110px,#b9bfff 154px,#ffb6fd 193px,#ff89c8 225px,#ff518b 275px,#ff2365 312px,#ff0d5b 322px,#ff0059 324px,#ff002b 364px,#ff0012 377px,#ff0000 381px,#ff0000 393px)"></i>
<i style="top:372px;left:84px;width:394px;background:linear-gradient(90deg,#00caff 0px,#00c4ff 82px,#15c4ff 84px,#32c3ff 90px,#5bc2ff 105px,#9fbdff 139px,#ffb3fe 192px,#ff87cb 223px,#ff5090 271px,#ff256c 306px,#ff0d61 317px,#ff005f 319px,#ff002d 364px,#ff0013 378px,#ff0009 381px,#ff0000 382px,#ff0000 394px)"></i>
<i style="top:374px;left:84px;width:396px;background:linear-gradient(90deg,#00c8ff 0px,#00c1ff 82px,#17c1ff 84px,#32c0ff 90px,#59bfff 104px,#9bbaff 137px,#ffaefe 193px,#ff83cb 224px,#ff4f94 269px,#ff2571 302px,#ff0d67 313px,#ff0065 315px,#ff002c 367px,#ff0012 381px,#ff0000 385px,#ff0000 396px)"></i>
<i style="top:376px;left:85px;width:397px;background:linear-gradient(90deg,#00c6ff 0px,#00bfff 81px,#11bfff 82px,#2cbeff 87px,#52bcff 100px,#8cb8ff 128px,#ffabff 192px,#ff7ecb 224px,#ff4691 272px,#ff2275 299px,#ff0d6c 308px,#ff006a 310px,#ff002f 366px,#ff0013 382px,#ff0008 385px,#ff0000 386px,#ff0000 397px)"></i>
<i style="top:378px;left:85px;width:399px;background:linear-gradient(90deg,#00c4ff 0px,#00bcff 80px,#1abcff 83px,#3abbff 91px,#64b9ff 108px,#b1b1ff 149px,#ffa4fd 194px,#ff7acb 225px,#ff3f8f 275px,#ff1c78 298px,#ff0d72 304px,#ff0070 306px,#ff0032 366px,#ff0016 383px,#ff000a 387px,#ff0000 389px,#ff0000 399px)"></i>
<i style="top:380px;left:86px;width:401px;background:linear-gradient(90deg,#00c1ff 0px,#00baff 79px,#15b9ff 81px,#31b9ff 87px,#5cb6ff 103px,#adafff 146px,#ffa1fe 193px,#ff75cb 225px,#ff3b92 273px,#ff1b7c 294px,#ff0876 300px,#ff0075 301px,#ff0036 364px,#ff0019 383px,#ff000c 388px,#ff0000 390px,#ff0000 401px)"></i>
<i style="top:382px;left:86px;width:403px;background:linear-gradient(90deg,#00bfff 0px,#00b7ff 79px,#0eb7ff 80px,#26b6ff 84px,#49b5ff 95px,#8bafff 127px,#ff9dff 193px,#ff6ec8 228px,#ff2b8b 281px,#ff137f 293px,#ff007b 297px,#ff0035 367px,#ff0018 386px,#ff000a 391px,#ff0000 393px,#ff0000 403px)"></i>
<i style="top:384px;left:86px;width:405px;background:linear-gradient(90deg,#00bdff 0px,#00b5ff 79px,#10b4ff 80px,#27b4ff 84px,#4eb2ff 97px,#90acff 130px,#ff99ff 194px,#ff6ccb 227px,#ff2e93 275px,#ff1685 288px,#ff0781 292px,#ff0081 293px,#ff0033 371px,#ff0015 390px,#ff0007 394px,#ff0000 395px,#ff0000 405px)"></i>
<i style="top:386px;left:87px;width:406px;background:linear-gradient(90deg,#00bbff 0px,#00b2ff 77px,#1fb2ff 81px,#42b0ff 91px,#76acff 115px,#fc95ff 192px,#ff85ed 204px,#ff54b8 242px,#ff2592 276px,#ff1089 285px,#ff0086 288px,#ff0032 373px,#ff0016 391px,#ff0009 395px,#ff0001 396px,#ff0000 406px)"></i>
<i style="top:388px;left:88px;width:406px;background:linear-gradient(90deg,#00b9ff 0px,#00b0ff 76px,#1bafff 79px,#36aeff 86px,#5eabff 102px,#a4a2ff 140px,#fe8fff 193px,#ff5dc6 231px,#ff2799 270px,#ff108e 280px,#ff008b 283px,#ff0036 371px,#ff0017 392px,#ff0006 397px,#ff0000 398px,#ff0000 406px)"></i>
<i style="top:390px;left:88px;width:405px;background:linear-gradient(90deg,#00b7ff 0px,#00adff 76px,#0eadff 77px,#25acff 81px,#45aaff 91px,#7fa5ff 119px,#f88dff 190px,#ff88fc 196px,#ff57c6 232px,#ff299f 265px,#ff1395 275px,#ff0091 279px,#ff0035 374px,#ff0017 394px,#ff0009 399px,#ff0000 400px,#ff0000 405px)"></i>
<i style="top:392px;left:89px;width:399px;background:linear-gradient(90deg,#00b5ff 0px,#00abff 75px,#10aaff 76px,#26aaff 80px,#4da7ff 93px,#8da0ff 126px,#fc87ff 192px,#ff80f8 198px,#ff4ec2 235px,#ff22a1 264px,#ff0c98 272px,#ff0096 274px,#ff0033 377px,#ff0016 396px,#ff000e 399px)"></i>
<i style="top:394px;left:89px;width:394px;background:linear-gradient(90deg,#00b3ff 0px,#00a8ff 74px,#19a8ff 77px,#38a6ff 85px,#5ea3ff 101px,#a199ff 138px,#fe81ff 194px,#ff4cc6 233px,#ff24a8 259px,#ff109f 267px,#ff009c 270px,#ff0031 381px,#ff001e 394px)"></i>
<i style="top:396px;left:90px;width:389px;background:linear-gradient(90deg,#00b1ff 0px,#00a6ff 73px,#14a5ff 75px,#2fa4ff 81px,#56a1ff 96px,#9598ff 130px,#f480ff 188px,#ff7afc 196px,#ff46c6 233px,#ff20ab 256px,#ff0ca4 263px,#ff00a1 265px,#ff0030 383px,#ff0028 389px)"></i>
<i style="top:398px;left:90px;width:384px;background:linear-gradient(90deg,#00afff 0px,#00a3ff 73px,#0ea3ff 74px,#25a2ff 78px,#49a0ff 90px,#8298ff 119px,#e580ff 180px,#ff76fd 196px,#ff3ec5 235px,#ff1caf 254px,#ff0ca9 259px,#ff00a7 261px,#ff0031 384px)"></i>
<i style="top:400px;left:91px;width:378px;background:linear-gradient(90deg,#00adff 0px,#02a1ff 72px,#10a1ff 73px,#26a0ff 77px,#499dff 89px,#8095ff 117px,#df7eff 176px,#ff70fd 196px,#ff3dca 231px,#ff1cb4 249px,#ff0caf 254px,#ff00ad 256px,#ff006b 324px,#ff0039 378px)"></i>
<i style="top:402px;left:91px;width:373px;background:linear-gradient(90deg,#00abff 0px,#009fff 71px,#199eff 74px,#379cff 82px,#6397ff 101px,#ba85ff 153px,#ff6cfe 196px,#ff34c9 233px,#ff1ab9 246px,#ff0bb5 250px,#ff00b2 252px,#ff006a 327px,#ff0041 373px)"></i>
<i style="top:404px;left:92px;width:368px;background:linear-gradient(90deg,#00a9ff 0px,#009cff 70px,#149cff 72px,#329aff 79px,#5f95ff 98px,#b084ff 146px,#f66bff 190px,#ff66fe 196px,#ff2eca 232px,#ff14bd 243px,#ff00b8 247px,#ff006f 322px,#ff0046 368px)"></i>
<i style="top:406px;left:92px;width:363px;background:linear-gradient(90deg,#00a7ff 0px,#009aff 70px,#0e99ff 71px,#2498ff 75px,#4596ff 86px,#778eff 111px,#d076ff 167px,#ff60fd 197px,#ff2ace 230px,#ff14c3 239px,#ff0bc0 241px,#ff01bf 242px,#ff007c 309px,#ff004d 363px)"></i>
<i style="top:408px;left:93px;width:357px;background:linear-gradient(90deg,#00a5ff 0px,#0097ff 68px,#0397ff 69px,#1097ff 70px,#2996ff 75px,#4a92ff 87px,#8189ff 116px,#d76fff 171px,#ff5afd 197px,#ff27d2 227px,#ff10c8 235px,#ff0bc6 236px,#ff00c5 237px,#ff008a 294px,#ff0053 357px)"></i>
<i style="top:410px;left:93px;width:353px;background:linear-gradient(90deg,#00a3ff 0px,#0095ff 68px,#1894ff 71px,#3093ff 77px,#578eff 93px,#9980ff 131px,#de67ff 176px,#ff53fd 198px,#ff25d7 224px,#ff10ce 231px,#ff0bcd 232px,#ff00cb 233px,#ff0085 301px,#ff0059 353px)"></i>
<i style="top:412px;left:94px;width:347px;background:linear-gradient(90deg,#00a1ff 0px,#0092ff 67px,#1492ff 69px,#2e90ff 75px,#558cff 91px,#947eff 127px,#dd63ff 175px,#ff4efe 197px,#ff23dc 220px,#ff10d4 226px,#ff0bd3 227px,#ff00d2 228px,#ff009b 278px,#ff005e 347px)"></i>
<i style="top:414px;left:95px;width:341px;background:linear-gradient(90deg,#009eff 0px,#0090ff 66px,#0e90ff 67px,#248fff 71px,#498bff 84px,#8280ff 115px,#d363ff 168px,#ff46fd 197px,#ff1ee0 217px,#ff0bd9 222px,#ff00d8 223px,#ff009e 275px,#ff0064 341px)"></i>
<i style="top:416px;left:95px;width:337px;background:linear-gradient(90deg,#009cff 0px,#008eff 65px,#038dff 66px,#108dff 67px,#288cff 72px,#4988ff 84px,#7d7eff 112px,#c963ff 162px,#fb45ff 194px,#ff37f7 202px,#ff18e4 215px,#ff0ae0 218px,#ff00de 219px,#ff00a5 269px,#ff0069 337px)"></i>
<i style="top:418px;left:96px;width:331px;background:linear-gradient(90deg,#009aff 0px,#008bff 64px,#188aff 67px,#3588ff 75px,#5a83ff 91px,#a26fff 135px,#de53ff 175px,#ff38fe 197px,#ff18eb 210px,#ff0ae6 213px,#ff00e5 214px,#ff00b0 259px,#ff006f 331px)"></i>
<i style="top:420px;left:96px;width:326px;background:linear-gradient(90deg,#0098ff 0px,#0089ff 64px,#1388ff 66px,#2d86ff 72px,#5481ff 88px,#9172ff 124px,#cf56ff 166px,#f43cff 190px,#ff2cfc 199px,#ff14f0 207px,#ff0aed 209px,#ff00ec 210px,#ff00b6 254px,#ff0074 326px)"></i>
<i style="top:422px;left:97px;width:321px;background:linear-gradient(90deg,#0096ff 0px,#0086ff 63px,#0e86ff 64px,#2784ff 69px,#4c80ff 83px,#8672ff 116px,#c955ff 161px,#ed3bff 185px,#ff22fd 198px,#ff10f6 203px,#ff00f3 205px,#ff00bf 246px,#ff0081 311px,#ff0079 321px)"></i>
<i style="top:424px;left:98px;width:315px;background:linear-gradient(90deg,#0094ff 0px,#0084ff 61px,#0484ff 62px,#1083ff 63px,#2882ff 68px,#507cff 84px,#896eff 117px,#c651ff 159px,#e937ff 182px,#fb1fff 194px,#ff10fd 198px,#ff00fa 200px,#ff00c7 239px,#ff0091 293px,#ff007f 315px)"></i>
<i style="top:426px;left:98px;width:310px;background:linear-gradient(90deg,#0092ff 0px,#0082ff 61px,#1881ff 64px,#357eff 72px,#6775ff 96px,#b656ff 148px,#dc3cff 174px,#f221ff 189px,#fa10ff 194px,#fd00ff 196px,#ff00be 248px,#ff0084 310px)"></i>
<i style="top:428px;left:99px;width:305px;background:linear-gradient(90deg,#008fff 0px,#007fff 60px,#137eff 62px,#297dff 67px,#4c77ff 81px,#7f6aff 110px,#b850ff 149px,#dc34ff 174px,#f018ff 187px,#f409ff 190px,#f600ff 191px,#ff00fc 199px,#ff00c7 240px,#ff008a 303px,#ff0089 305px)"></i>
<i style="top:430px;left:100px;width:299px;background:linear-gradient(90deg,#008dff 0px,#007dff 59px,#0e7cff 60px,#237bff 64px,#4476ff 76px,#746bff 102px,#b94bff 149px,#da2eff 172px,#e917ff 182px,#ed08ff 185px,#ef00ff 186px,#ff00fd 198px,#ff00c7 240px,#ff008e 299px)"></i>
<i style="top:432px;left:100px;width:294px;background:linear-gradient(90deg,#008bff 0px,#007aff 58px,#047aff 59px,#107aff 60px,#2778ff 65px,#4973ff 78px,#8263ff 111px,#bb44ff 151px,#d828ff 171px,#e313ff 179px,#e800ff 182px,#ff00fd 199px,#ff00c8 240px,#ff0094 294px)"></i>
<i style="top:434px;left:101px;width:289px;background:linear-gradient(90deg,#0089ff 0px,#0078ff 57px,#1777ff 60px,#2e74ff 66px,#576dff 84px,#9954ff 126px,#c239ff 155px,#d71fff 170px,#de0eff 175px,#e100ff 177px,#ff00fe 198px,#ff00cd 236px,#ff0098 289px)"></i>
<i style="top:436px;left:102px;width:283px;background:linear-gradient(90deg,#0087ff 0px,#0075ff 56px,#1375ff 58px,#2f72ff 65px,#576aff 83px,#9951ff 125px,#c034ff 153px,#d21cff 166px,#d80dff 170px,#db00ff 172px,#ff00fe 198px,#ff00cd 236px,#ff009e 283px)"></i>
<i style="top:438px;left:102px;width:278px;background:linear-gradient(90deg,#0085ff 0px,#0073ff 56px,#0e72ff 57px,#2670ff 62px,#496aff 76px,#7a5bff 104px,#ab40ff 138px,#c328ff 156px,#d012ff 165px,#d400ff 168px,#ff00fd 199px,#ff00c6 243px,#ff00a4 278px)"></i>
<i style="top:440px;left:103px;width:272px;background:linear-gradient(90deg,#0082ff 0px,#0071ff 54px,#0470ff 55px,#1070ff 56px,#2a6dff 62px,#5066ff 78px,#8e4eff 117px,#b433ff 144px,#c718ff 158px,#cb0dff 161px,#ce00ff 163px,#ff00fd 199px,#ff00c6 243px,#ff00a9 272px)"></i>
<i style="top:442px;left:104px;width:267px;background:linear-gradient(90deg,#0080ff 0px,#006eff 53px,#176dff 56px,#3369ff 64px,#5d5fff 84px,#9943ff 124px,#b629ff 145px,#c411ff 155px,#c800ff 158px,#ff00fe 198px,#ff00cc 238px,#ff00ae 267px)"></i>
<i style="top:444px;left:104px;width:262px;background:linear-gradient(90deg,#007eff 0px,#006bff 53px,#136bff 55px,#2b68ff 61px,#5060ff 77px,#8b47ff 114px,#ad2cff 139px,#bc14ff 150px,#bf0cff 152px,#c200ff 154px,#ff00fd 199px,#ff00c4 246px,#ff00b4 262px)"></i>
<i style="top:446px;left:105px;width:256px;background:linear-gradient(90deg,#007bff 0px,#0069ff 52px,#0e68ff 53px,#2266ff 57px,#4261ff 69px,#754fff 98px,#a231ff 130px,#b517ff 144px,#b90bff 147px,#bc00ff 149px,#ff00fd 199px,#ff00c5 245px,#ff00ba 256px)"></i>
<i style="top:448px;left:106px;width:251px;background:linear-gradient(90deg,#0079ff 0px,#0066ff 50px,#1b65ff 54px,#3c5fff 65px,#6a51ff 90px,#9a33ff 123px,#ac1cff 137px,#b30bff 142px,#b402ff 143px,#ff00fd 199px,#ff00cc 239px,#ff00bf 251px)"></i>
<i style="top:450px;left:107px;width:245px;background:linear-gradient(90deg,#0076ff 0px,#0064ff 49px,#1762ff 52px,#325eff 60px,#5854ff 78px,#8d38ff 113px,#a51dff 131px,#ad0bff 137px,#af00ff 138px,#ff00fe 198px,#ff00cc 239px,#ff00c5 245px)"></i>
<i style="top:452px;left:107px;width:240px;background:linear-gradient(90deg,#0074ff 0px,#0061ff 49px,#1360ff 51px,#2b5dff 57px,#5154ff 74px,#8836ff 110px,#a11bff 128px,#a80aff 133px,#a900ff 134px,#ff00fd 199px,#ff00cc 240px)"></i>
<i style="top:454px;left:108px;width:235px;background:linear-gradient(90deg,#0072ff 0px,#005eff 48px,#0d5eff 49px,#215cff 53px,#3f56ff 64px,#6d44ff 90px,#9029ff 115px,#9e15ff 125px,#a20aff 128px,#a300ff 129px,#ff00fd 199px,#ff00d1 235px)"></i>
<i style="top:456px;left:109px;width:229px;background:linear-gradient(90deg,#006fff 0px,#005cff 46px,#1a5aff 50px,#3456ff 58px,#5f47ff 80px,#8b29ff 110px,#9a12ff 121px,#9c09ff 123px,#9e00ff 124px,#ff00fe 198px,#ff00d8 229px)"></i>
<i style="top:458px;left:110px;width:223px;background:linear-gradient(90deg,#006dff 0px,#0059ff 45px,#1758ff 48px,#3752ff 58px,#6441ff 82px,#8627ff 106px,#9412ff 116px,#9709ff 118px,#9800ff 119px,#ff00fe 198px,#ff00de 223px)"></i>
<i style="top:460px;left:111px;width:218px;background:linear-gradient(90deg,#006aff 0px,#0056ff 44px,#1355ff 46px,#3051ff 54px,#5c41ff 76px,#8225ff 102px,#900eff 112px,#9200ff 114px,#ff00fd 198px,#ff00e4 218px)"></i>
<i style="top:462px;left:111px;width:213px;background:linear-gradient(90deg,#0068ff 0px,#0053ff 44px,#0d53ff 45px,#2150ff 49px,#4049ff 61px,#6d32ff 87px,#831bff 103px,#8a0dff 108px,#8d00ff 110px,#ff00fd 199px,#ff00eb 213px)"></i>
<i style="top:464px;left:112px;width:207px;background:linear-gradient(90deg,#0065ff 0px,#0051ff 42px,#1a4fff 46px,#3848ff 56px,#6434ff 80px,#7e1bff 98px,#850dff 103px,#8700ff 105px,#ff00fe 198px,#ff00f2 207px)"></i>
<i style="top:466px;left:113px;width:202px;background:linear-gradient(90deg,#0062ff 0px,#004eff 41px,#164cff 44px,#2c48ff 50px,#523aff 68px,#7222ff 89px,#7f0dff 98px,#8200ff 100px,#ff00fe 198px,#ff00f8 202px)"></i>
<i style="top:468px;left:114px;width:196px;background:linear-gradient(90deg,#005fff 0px,#004bff 40px,#124aff 42px,#2946ff 48px,#4d39ff 64px,#701eff 86px,#790cff 93px,#7c00ff 95px,#fe00ff 196px)"></i>
<i style="top:470px;left:115px;width:190px;background:linear-gradient(90deg,#005dff 0px,#0048ff 39px,#0d47ff 40px,#2144ff 44px,#413aff 57px,#6721ff 79px,#7210ff 87px,#7600ff 90px,#f600ff 190px)"></i>
<i style="top:472px;left:115px;width:185px;background:linear-gradient(90deg,#005aff 0px,#0045ff 38px,#1a42ff 42px,#373aff 52px,#6121ff 75px,#6e0cff 84px,#7100ff 86px,#ef00ff 185px)"></i>
<i style="top:474px;left:116px;width:180px;background:linear-gradient(90deg,#0057ff 0px,#0042ff 37px,#163fff 40px,#3039ff 48px,#5625ff 67px,#670fff 78px,#6b00ff 81px,#d600ff 165px,#e900ff 180px)"></i>
<i style="top:476px;left:117px;width:174px;background:linear-gradient(90deg,#0054ff 0px,#003eff 36px,#123dff 38px,#2938ff 44px,#5123ff 63px,#610fff 73px,#6500ff 76px,#b300ff 136px,#e200ff 174px)"></i>
<i style="top:478px;left:118px;width:168px;background:linear-gradient(90deg,#0051ff 0px,#003bff 35px,#0d3aff 36px,#2436ff 41px,#4824ff 57px,#5b0fff 68px,#5f00ff 71px,#a400ff 123px,#db00ff 168px)"></i>
<i style="top:480px;left:119px;width:163px;background:linear-gradient(90deg,#004eff 0px,#0038ff 33px,#1934ff 37px,#342bff 46px,#5114ff 61px,#5805ff 65px,#5b00ff 67px,#a100ff 120px,#d500ff 163px)"></i>
<i style="top:482px;left:120px;width:157px;background:linear-gradient(90deg,#004aff 0px,#0034ff 32px,#1631ff 35px,#3028ff 43px,#4a14ff 56px,#5300ff 61px,#8d00ff 103px,#cf00ff 157px)"></i>
<i style="top:484px;left:121px;width:151px;background:linear-gradient(90deg,#0047ff 0px,#0030ff 31px,#122eff 33px,#2e24ff 41px,#4511ff 52px,#4c00ff 56px,#7f00ff 91px,#c800ff 151px)"></i>
<i style="top:486px;left:122px;width:146px;background:linear-gradient(90deg,#0043ff 0px,#002bff 30px,#0d2aff 31px,#2324ff 36px,#400eff 48px,#4500ff 51px,#7200ff 80px,#c300ff 146px)"></i>
<i style="top:488px;left:123px;width:140px;background:linear-gradient(90deg,#0040ff 0px,#0027ff 28px,#1922ff 32px,#3610ff 42px,#3e00ff 46px,#6b00ff 74px,#bc00ff 140px)"></i>
<i style="top:490px;left:124px;width:134px;background:linear-gradient(90deg,#003cff 0px,#0022ff 27px,#161eff 30px,#2f0dff 38px,#3600ff 41px,#6000ff 65px,#b100ff 130px,#b600ff 134px)"></i>
<i style="top:492px;left:125px;width:129px;background:linear-gradient(90deg,#0037ff 0px,#001fff 24px,#001cff 26px,#1218ff 28px,#2809ff 34px,#2b00ff 35px,#4f00ff 53px,#8700ff 94px,#b100ff 129px)"></i>
<i style="top:494px;left:126px;width:123px;background:linear-gradient(90deg,#0033ff 0px,#001aff 22px,#0014ff 25px,#0d12ff 26px,#1c09ff 29px,#2000ff 30px,#4100ff 44px,#7400ff 78px,#ab00ff 123px)"></i>
<i style="top:496px;left:127px;width:117px;background:linear-gradient(90deg,#002eff 0px,#0018ff 18px,#000cff 23px,#0f00ff 25px,#2600ff 31px,#4800ff 47px,#7c00ff 83px,#a500ff 117px)"></i>
<i style="top:498px;left:128px;width:112px;background:linear-gradient(90deg,#0029ff 0px,#0012ff 16px,#0008ff 19px,#0000ff 20px,#0000ff 22px,#1600ff 25px,#3100ff 34px,#5700ff 55px,#9600ff 104px,#a000ff 112px)"></i>
<i style="top:500px;left:129px;width:106px;background:linear-gradient(90deg,#0023ff 0px,#000fff 12px,#0008ff 14px,#0000ff 15px,#0000ff 21px,#1200ff 23px,#2d00ff 31px,#5100ff 50px,#8f00ff 97px,#9900ff 106px)"></i>
<i style="top:502px;left:130px;width:100px;background:linear-gradient(90deg,#001cff 0px,#000cff 8px,#0000ff 10px,#0000ff 20px,#0d00ff 21px,#1f00ff 25px,#3c00ff 37px,#6700ff 64px,#9300ff 100px)"></i>
<i style="top:504px;left:132px;width:93px;background:linear-gradient(90deg,#0011ff 0px,#0007ff 3px,#0000ff 4px,#0000ff 17px,#1900ff 21px,#3700ff 32px,#6400ff 60px,#8d00ff 93px)"></i>
<i style="top:506px;left:133px;width:88px;background:linear-gradient(90deg,#0000ff 0px,#0000ff 16px,#1500ff 19px,#2c00ff 26px,#5300ff 47px,#8800ff 88px)"></i>
<i style="top:508px;left:134px;width:82px;background:linear-gradient(90deg,#0000ff 0px,#0000ff 15px,#1200ff 17px,#2c00ff 25px,#5000ff 44px,#8200ff 82px)"></i>
<i style="top:510px;left:136px;width:75px;background:linear-gradient(90deg,#0000ff 0px,#0000ff 13px,#0d00ff 14px,#1f00ff 18px,#3e00ff 31px,#7000ff 65px,#7c00ff 75px)"></i>
<i style="top:512px;left:137px;width:70px;background:linear-gradient(90deg,#0000ff 0px,#0000ff 11px,#1900ff 15px,#3600ff 26px,#5f00ff 51px,#7700ff 70px)"></i>
<i style="top:514px;left:139px;width:63px;background:linear-gradient(90deg,#0000ff 0px,#0000ff 9px,#1500ff 12px,#3000ff 21px,#5800ff 44px,#7100ff 63px)"></i>
<i style="top:516px;left:141px;width:56px;background:linear-gradient(90deg,#0000ff 0px,#0000ff 7px,#1200ff 9px,#2c00ff 17px,#4f00ff 36px,#6b00ff 56px)"></i>
<i style="top:518px;left:143px;width:50px;background:linear-gradient(90deg,#0000ff 0px,#0100ff 5px,#0d00ff 6px,#2500ff 12px,#4900ff 30px,#6600ff 50px)"></i>
<i style="top:520px;left:145px;width:43px;background:linear-gradient(90deg,#0000ff 0px,#0000ff 2px,#1400ff 5px,#2f00ff 14px,#5700ff 37px,#5f00ff 43px)"></i>
<i style="top:522px;left:147px;width:36px;background:linear-gradient(90deg,#0000ff 0px,#1500ff 3px,#2d00ff 11px,#5100ff 31px,#5800ff 36px)"></i>
<i style="top:524px;left:150px;width:29px;background:linear-gradient(90deg,#1600ff 0px,#3000ff 9px,#5200ff 29px)"></i>
<i style="top:526px;left:152px;width:22px;background:linear-gradient(90deg,#1e00ff 0px,#3c00ff 13px,#4b00ff 22px)"></i>
<i style="top:528px;left:155px;width:14px;background:linear-gradient(90deg,#2700ff 0px,#4300ff 14px)"></i>
<i style="top:530px;left:157px;width:8px;background:linear-gradient(90deg,#2d00ff 0px,#3d00ff 8px)"></i></div>
<svg class="a" style="left:0;top:0" width="797" height="652" viewBox="0 0 797 652" font-family="Liberation Sans, sans-serif">
<path fill="#666" fill-rule="evenodd" d="M58 75H500V534H58Z M161.5 530.8 L161.3 530.8 L161.0 530.9 L160.6 530.9 L159.9 530.7 L158.4 529.7 L155.7 527.6 L155.4 527.3 L155.0 527.0 L154.6 526.7 L154.2 526.4 L153.8 526.0 L153.3 525.6 L152.8 525.2 L152.3 524.8 L151.7 524.3 L151.1 523.9 L150.5 523.4 L149.9 522.9 L149.2 522.3 L148.5 521.8 L147.8 521.2 L147.1 520.5 L146.3 519.8 L145.4 519.0 L144.6 518.2 L143.7 517.4 L142.8 516.4 L141.8 515.5 L140.8 514.4 L139.8 513.2 L138.6 511.8 L137.5 510.3 L136.2 508.5 L134.8 506.6 L133.4 504.4 L131.9 502.1 L130.3 499.5 L128.7 496.6 L127.0 493.5 L125.2 490.1 L123.3 486.3 L121.4 482.1 L119.3 477.6 L117.2 472.6 L114.9 467.2 L112.5 461.4 L110.0 455.0 L107.4 448.2 L104.7 440.8 L101.9 432.9 L99.1 424.4 L96.4 415.3 L93.6 405.6 L90.8 395.4 L88.1 384.5 L85.4 373.1 L82.6 361.1 L79.9 348.7 L77.3 335.8 L74.8 322.6 L72.4 309.1 L70.2 295.5 L68.1 281.7 L66.3 268.0 L64.7 254.3 L63.4 240.8 L62.3 227.5 L61.4 214.5 L60.9 201.8 L60.7 189.4 L60.8 177.5 L61.3 166.0 L62.1 155.0 L63.3 144.6 L64.8 134.7 L66.7 125.6 L69.0 117.2 L71.7 109.6 L74.7 102.9 L77.9 97.0 L81.5 92.0 L85.3 88.0 L89.4 84.8 L93.6 82.5 L97.9 81.0 L102.4 80.2 L107.0 80.0 L111.7 80.4 L116.5 81.3 L121.2 82.7 L126.0 84.3 L130.9 86.2 L135.7 88.3 L140.5 90.5 L145.3 92.9 L150.0 95.3 L154.6 97.9 L159.2 100.4 L163.7 103.1 L168.2 105.8 L172.6 108.5 L177.0 111.4 L181.3 114.3 L185.7 117.3 L190.0 120.3 L194.3 123.4 L198.6 126.5 L202.9 129.8 L207.2 133.0 L211.5 136.3 L215.7 139.7 L220.0 143.1 L224.2 146.5 L228.4 150.0 L232.7 153.5 L236.9 157.1 L241.1 160.7 L245.3 164.3 L249.6 167.9 L253.8 171.6 L258.0 175.3 L262.2 179.0 L266.5 182.7 L270.7 186.4 L275.0 190.2 L279.2 194.0 L283.4 197.7 L287.6 201.5 L291.8 205.3 L296.0 209.1 L300.2 212.9 L304.4 216.7 L308.6 220.5 L312.8 224.3 L317.0 228.1 L321.2 231.9 L325.3 235.7 L329.5 239.5 L333.6 243.2 L337.6 246.9 L341.7 250.7 L345.8 254.4 L349.8 258.0 L353.8 261.7 L357.7 265.3 L361.6 268.9 L365.5 272.5 L369.4 276.1 L373.2 279.6 L377.0 283.0 L380.7 286.4 L384.4 289.8 L388.1 293.1 L391.7 296.4 L395.2 299.7 L398.7 302.9 L402.2 306.0 L405.5 309.1 L408.8 312.1 L412.0 315.1 L415.1 317.9 L418.1 320.7 L421.1 323.4 L423.9 326.0 L426.7 328.5 L429.4 331.0 L432.0 333.4 L434.6 335.8 L437.1 338.1 L439.6 340.3 L441.9 342.4 L444.2 344.5 L446.3 346.5 L448.4 348.3 L450.4 350.2 L452.3 351.9 L454.2 353.6 L455.9 355.2 L457.6 356.8 L459.2 358.3 L460.8 359.7 L462.3 361.0 L463.7 362.3 L465.0 363.6 L466.3 364.8 L467.5 365.9 L477.2 374.7 L483.8 380.8 L487.9 384.5 L490.3 386.7 L491.5 387.8 L492.3 388.5 L492.9 389.1 L493.1 389.3Z"/>
<path d="M113.2 478.6h7M116.7 475.1v7M113.2 424.3h7M116.7 420.8v7M113.2 369.9h7M116.7 366.4v7M113.2 315.5h7M116.7 312.0v7M113.2 261.1h7M116.7 257.6v7M113.2 206.8h7M116.7 203.3v7M113.2 152.4h7M116.7 148.9v7M113.2 98.0h7M116.7 94.5v7M172.4 478.6h7M175.9 475.1v7M172.4 424.3h7M175.9 420.8v7M172.4 369.9h7M175.9 366.4v7M172.4 315.5h7M175.9 312.0v7M172.4 261.1h7M175.9 257.6v7M172.4 206.8h7M175.9 203.3v7M172.4 152.4h7M175.9 148.9v7M231.5 478.6h7M235.0 475.1v7M231.5 424.3h7M235.0 420.8v7M231.5 369.9h7M235.0 366.4v7M231.5 315.5h7M235.0 312.0v7M231.5 261.1h7M235.0 257.6v7M231.5 206.8h7M235.0 203.3v7M231.5 152.4h7M235.0 148.9v7M290.7 478.6h7M294.2 475.1v7M290.7 424.3h7M294.2 420.8v7M290.7 369.9h7M294.2 366.4v7M290.7 315.5h7M294.2 312.0v7M290.7 261.1h7M294.2 257.6v7M290.7 206.8h7M294.2 203.3v7M349.8 424.3h7M353.3 420.8v7M349.8 369.9h7M353.3 366.4v7M349.8 315.5h7M353.3 312.0v7M349.8 261.1h7M353.3 257.6v7M408.9 424.3h7M412.4 420.8v7M408.9 369.9h7M412.4 366.4v7" stroke="#b0b0b0" stroke-width="1" fill="none"/>
<path d="M161.5 530.8 L161.3 530.8 L161.0 530.9 L160.6 530.9 L159.9 530.7 L158.4 529.7 L155.7 527.6 L155.4 527.3 L155.0 527.0 L154.6 526.7 L154.2 526.4 L153.8 526.0 L153.3 525.6 L152.8 525.2 L152.3 524.8 L151.7 524.3 L151.1 523.9 L150.5 523.4 L149.9 522.9 L149.2 522.3 L148.5 521.8 L147.8 521.2 L147.1 520.5 L146.3 519.8 L145.4 519.0 L144.6 518.2 L143.7 517.4 L142.8 516.4 L141.8 515.5 L140.8 514.4 L139.8 513.2 L138.6 511.8 L137.5 510.3 L136.2 508.5 L134.8 506.6 L133.4 504.4 L131.9 502.1 L130.3 499.5 L128.7 496.6 L127.0 493.5 L125.2 490.1 L123.3 486.3 L121.4 482.1 L119.3 477.6 L117.2 472.6 L114.9 467.2 L112.5 461.4 L110.0 455.0 L107.4 448.2 L104.7 440.8 L101.9 432.9 L99.1 424.4 L96.4 415.3 L93.6 405.6 L90.8 395.4 L88.1 384.5 L85.4 373.1 L82.6 361.1 L79.9 348.7 L77.3 335.8 L74.8 322.6 L72.4 309.1 L70.2 295.5 L68.1 281.7 L66.3 268.0 L64.7 254.3 L63.4 240.8 L62.3 227.5 L61.4 214.5 L60.9 201.8 L60.7 189.4 L60.8 177.5 L61.3 166.0 L62.1 155.0 L63.3 144.6 L64.8 134.7 L66.7 125.6 L69.0 117.2 L71.7 109.6 L74.7 102.9 L77.9 97.0 L81.5 92.0 L85.3 88.0 L89.4 84.8 L93.6 82.5 L97.9 81.0 L102.4 80.2 L107.0 80.0 L111.7 80.4 L116.5 81.3 L121.2 82.7 L126.0 84.3 L130.9 86.2 L135.7 88.3 L140.5 90.5 L145.3 92.9 L150.0 95.3 L154.6 97.9 L159.2 100.4 L163.7 103.1 L168.2 105.8 L172.6 108.5 L177.0 111.4 L181.3 114.3 L185.7 117.3 L190.0 120.3 L194.3 123.4 L198.6 126.5 L202.9 129.8 L207.2 133.0 L211.5 136.3 L215.7 139.7 L220.0 143.1 L224.2 146.5 L228.4 150.0 L232.7 153.5 L236.9 157.1 L241.1 160.7 L245.3 164.3 L249.6 167.9 L253.8 171.6 L258.0 175.3 L262.2 179.0 L266.5 182.7 L270.7 186.4 L275.0 190.2 L279.2 194.0 L283.4 197.7 L287.6 201.5 L291.8 205.3 L296.0 209.1 L300.2 212.9 L304.4 216.7 L308.6 220.5 L312.8 224.3 L317.0 228.1 L321.2 231.9 L325.3 235.7 L329.5 239.5 L333.6 243.2 L337.6 246.9 L341.7 250.7 L345.8 254.4 L349.8 258.0 L353.8 261.7 L357.7 265.3 L361.6 268.9 L365.5 272.5 L369.4 276.1 L373.2 279.6 L377.0 283.0 L380.7 286.4 L384.4 289.8 L388.1 293.1 L391.7 296.4 L395.2 299.7 L398.7 302.9 L402.2 306.0 L405.5 309.1 L408.8 312.1 L412.0 315.1 L415.1 317.9 L418.1 320.7 L421.1 323.4 L423.9 326.0 L426.7 328.5 L429.4 331.0 L432.0 333.4 L434.6 335.8 L437.1 338.1 L439.6 340.3 L441.9 342.4 L444.2 344.5 L446.3 346.5 L448.4 348.3 L450.4 350.2 L452.3 351.9 L454.2 353.6 L455.9 355.2 L457.6 356.8 L459.2 358.3 L460.8 359.7 L462.3 361.0 L463.7 362.3 L465.0 363.6 L466.3 364.8 L467.5 365.9 L477.2 374.7 L483.8 380.8 L487.9 384.5 L490.3 386.7 L491.5 387.8 L492.3 388.5 L492.9 389.1 L493.1 389.3Z" fill="none" stroke="#303030" stroke-width="2" stroke-linejoin="round"/>
<path d="M247.4 208.7L340 277.4L376.800 305L395.200 319.500L413.700 334L432.100 347L441.200 352.100L149.900 496.800Z" fill="none" stroke="#222" stroke-width="1.800" stroke-dasharray="2 2.600"/>
<path d="M238.900 178.200L253 188.600L276 208.200L291.400 221.200L306.700 232.900L322.100 244.300L337.400 257.500L350 268.400L358.400 275.800L376.800 290.500L395.200 307L413.700 322.700L432.100 338.400L450.500 354.800L462.200 363.900L420.700 383.600L310 433.800L244.900 463.300L151.400 505.700L174.400 419.300L182.800 389L191.300 358.400L201.400 324.400L206.500 304.400L216.600 267.300L225.700 233.500L230.800 213.300L233.500 199Z" fill="none" stroke="#000" stroke-width="2" stroke-linejoin="round"/>
<circle cx="262.5" cy="338.1" r="1.8" fill="#484848"/>
<path d="M57.5 74.5H500.5V534.5H57.5Z" fill="none" stroke="#fff" stroke-width="1"/>
<path d="M58.5 75.5H499.5V533.5H58.5Z" fill="none" stroke="#000" stroke-width="1"/>
<path d="M499.0 75V534" fill="none" stroke="#000" stroke-width="2"/>
<path d="M58.5 533v-5M58.5 76v4M117.5 533v-5M117.5 76v4M176.5 533v-5M176.5 76v4M235.5 533v-5M235.5 76v4M295.5 533v-5M295.5 76v4M354.5 533v-5M354.5 76v4M413.5 533v-5M413.5 76v4M472.5 533v-5M472.5 76v4M59 533.5h5M498 533.5h-5M59 479.5h5M498 479.5h-5M59 424.5h5M498 424.5h-5M59 370.5h5M498 370.5h-5M59 316.5h5M498 316.5h-5M59 261.5h5M498 261.5h-5M59 207.5h5M498 207.5h-5M59 152.5h5M498 152.5h-5M59 98.5h5M498 98.5h-5" stroke="#000" stroke-width="1" fill="none"/>
<circle cx="160.7" cy="530.6" r="3.5" fill="#4010d0" stroke="#a0a0a0" stroke-width=".9"/>
<text class="wl" x="147.5" y="532.4" text-anchor="end">400</text>
<circle cx="131.6" cy="501.8" r="3.5" fill="#0808d0" stroke="#a0a0a0" stroke-width=".9"/>
<text class="wl" x="122.6" y="506.6" text-anchor="end">470</text>
<circle cx="112.2" cy="461.1" r="3.5" fill="#1050d8" stroke="#a0a0a0" stroke-width=".9"/>
<text class="wl" x="102.5" y="465.9" text-anchor="end">480</text>
<circle cx="85.1" cy="372.8" r="3.5" fill="#1090b8" stroke="#a0a0a0" stroke-width=".9"/>
<text class="wd" x="93.7" y="377.6">490</text>
<circle cx="63.1" cy="240.5" r="3.5" fill="#10c080" stroke="#a0a0a0" stroke-width=".9"/>
<text class="wd" x="71.7" y="245.3">500</text>
<circle cx="66.4" cy="125.3" r="3.5" fill="#00e048" stroke="#a0a0a0" stroke-width=".9"/>
<text class="wd" x="75.6" y="130.1">510</text>
<circle cx="102.1" cy="79.9" r="3.5" fill="#00e400" stroke="#a0a0a0" stroke-width=".9"/>
<text class="wl" x="87.6" y="86.7" text-anchor="end">520</text>
<circle cx="149.7" cy="95.0" r="3.5" fill="#00d800" stroke="#a0a0a0" stroke-width=".9"/>
<text class="wl" x="158.9" y="99.8">530</text>
<circle cx="194.0" cy="123.1" r="3.5" fill="#28c800" stroke="#a0a0a0" stroke-width=".9"/>
<text class="wl" x="203.2" y="127.9">540</text>
<circle cx="278.9" cy="193.7" r="3.5" fill="#62a808" stroke="#a0a0a0" stroke-width=".9"/>
<text class="wl" x="288.1" y="198.5">560</text>
<circle cx="361.3" cy="268.6" r="3.5" fill="#b08a08" stroke="#a0a0a0" stroke-width=".9"/>
<text class="wl" x="370.5" y="273.4">580</text>
<circle cx="429.1" cy="330.7" r="3.5" fill="#c04808" stroke="#a0a0a0" stroke-width=".9"/>
<text class="wl" x="438.3" y="335.5">600</text>
<circle cx="467.2" cy="365.6" r="3.5" fill="#d00808" stroke="#a0a0a0" stroke-width=".9"/>
<text class="wl" x="476.4" y="370.4">620</text>
<circle cx="492.8" cy="389.0" r="3.5" fill="#d80818" stroke="#a0a0a0" stroke-width=".9"/>
<text class="wd" x="481.9" y="393.3" text-anchor="end">700</text>
<text class="ax" x="58.5" y="548" text-anchor="middle">0</text>
<text class="ax" x="117.7" y="548" text-anchor="middle">0.1</text>
<text class="ax" x="176.8" y="548" text-anchor="middle">0.2</text>
<text class="ax" x="235.9" y="548" text-anchor="middle">0.3</text>
<text class="ax" x="295.1" y="548" text-anchor="middle">0.4</text>
<text class="ax" x="354.2" y="548" text-anchor="middle">0.5</text>
<text class="ax" x="413.4" y="548" text-anchor="middle">0.6</text>
<text class="ax" x="472.5" y="548" text-anchor="middle">0.7</text>
<text class="ax" x="54" y="537.7" text-anchor="end">0</text>
<text class="ax" x="54" y="483.3" text-anchor="end">0.1</text>
<text class="ax" x="54" y="429.0" text-anchor="end">0.2</text>
<text class="ax" x="54" y="374.6" text-anchor="end">0.3</text>
<text class="ax" x="54" y="320.2" text-anchor="end">0.4</text>
<text class="ax" x="54" y="265.8" text-anchor="end">0.5</text>
<text class="ax" x="54" y="211.5" text-anchor="end">0.6</text>
<text class="ax" x="54" y="157.1" text-anchor="end">0.7</text>
<text class="ax" x="54" y="102.7" text-anchor="end">0.8</text>
<text x="277" y="563" text-anchor="middle" font-size="12" font-weight="bold">x</text>
<text transform="translate(28 303) rotate(-90)" text-anchor="middle" font-size="12" font-weight="bold">y</text>
<text class="info" x="486" y="91" xml:space="preserve" textLength="70" lengthAdjust="spacing">Input:  *sRGB</text>
<text class="info" x="486" y="105" xml:space="preserve" textLength="387" lengthAdjust="spacing">Output: Acer Predator XB273UGS_100cd_6500k_gamma22_08072020.icm</text>
<text class="info" x="486" y="119" xml:space="preserve" textLength="167.4" lengthAdjust="spacing">White point:  x = 0.346  y = 0.359</text>
<text class="info" x="486" y="133" xml:space="preserve" textLength="105.4" lengthAdjust="spacing">09-Jul-2020 10:38:13</text>
</svg>
<div id="hue" class="a" style="left:552px;top:56px;width:234px;height:234px;overflow:hidden;background:#828282"><i style="top:0px;background:linear-gradient(90deg,#fe0000 0px,#fe1600 6px,#fe4f00 14px,#fecf00 29px,#fef200 35px,#fcfe00 40px,#e3fe00 46px,#a7fe00 54px,#30fe00 68px,#0cfe00 74px,#00fe02 79px,#00fe1c 85px,#00fe57 93px,#00fecf 107px,#00fef2 113px,#00fcfe 118px,#00e3fe 124px,#00a7fe 132px,#0030fe 146px,#000cfe 152px,#0200fe 157px,#1c00fe 163px,#5700fe 171px,#cf00fe 185px,#f200fe 191px,#fe00fc 196px,#fe00e3 202px,#fe00a7 210px,#fe002f 224px,#fe000c 230px,#fe0000 234px)"></i>
<i style="top:3px;background:linear-gradient(90deg,#fc0000 0px,#fd1600 6px,#fd4e00 14px,#fdce00 29px,#fdf100 35px,#fbfd00 40px,#e2fd00 46px,#a6fd00 54px,#2ffd00 68px,#0cfd00 74px,#00fd02 79px,#00fd1c 85px,#00fd57 93px,#00fdce 107px,#00fdf1 113px,#00fbfd 118px,#00e2fd 124px,#00a6fd 132px,#002ffd 146px,#000cfd 152px,#0200fd 157px,#1b00fd 163px,#5700fd 171px,#ce00fd 185px,#f100fd 191px,#fd00fb 196px,#fd00e2 202px,#fd00a6 210px,#fd002f 224px,#fc000c 230px,#fc0000 234px)"></i>
<i style="top:6px;background:linear-gradient(90deg,#fa0000 0px,#fb1600 6px,#fb4e00 14px,#fccd00 29px,#fcf000 35px,#fafc00 40px,#e1fc00 46px,#a5fc00 54px,#2ffc00 68px,#0cfc00 74px,#00fc02 79px,#00fc1b 85px,#00fc57 93px,#00fccd 107px,#00fcf0 113px,#00fafc 118px,#00e1fc 124px,#00a6fc 132px,#002ffc 146px,#000cfc 152px,#0200fc 157px,#1b00fc 163px,#5600fc 171px,#cd00fc 185px,#f000fc 191px,#fc00fa 196px,#fc00e1 202px,#fc00a5 210px,#fb002f 224px,#fb000c 230px,#fa0000 234px)"></i>
<i style="top:9px;background:linear-gradient(90deg,#f90000 0px,#f91500 6px,#fa4d00 14px,#fbcc00 29px,#fbf300 36px,#f9fb00 40px,#e0fb00 46px,#a5fb00 54px,#2ffb00 68px,#0cfb00 74px,#00fa02 79px,#00fb1b 85px,#00fb56 93px,#00fbcc 107px,#00fbef 113px,#00f9fb 118px,#00e0fb 124px,#00a5fb 132px,#002ffb 146px,#000cfa 152px,#0200fa 157px,#1b00fa 163px,#5600fa 171px,#cc00fb 185px,#f300fb 192px,#fb00f9 196px,#fb00df 202px,#fa00a4 210px,#fa002f 224px,#f9000c 230px,#f90000 234px)"></i>
<i style="top:12px;background:linear-gradient(90deg,#f70000 0px,#f81500 6px,#f84d00 14px,#f9cb00 29px,#faf200 36px,#f8fa00 40px,#dffa00 46px,#a4fa00 54px,#2ff900 68px,#08f900 75px,#00f902 79px,#00f91b 85px,#00fa56 93px,#00facb 107px,#00faf2 114px,#00f8fa 118px,#00dffa 124px,#00a4fa 132px,#002ff9 146px,#0008f9 153px,#0200f9 157px,#1b00f9 163px,#5600f9 171px,#cb00f9 185px,#f200fa 192px,#fa00f8 196px,#f900de 202px,#f900a4 210px,#f8002e 224px,#f70008 231px,#f70000 234px)"></i>
<i style="top:15px;background:linear-gradient(90deg,#f50000 0px,#f61500 6px,#f74d00 14px,#f8ca00 29px,#f8f100 36px,#f7f900 40px,#def900 46px,#a3f800 54px,#2ef800 68px,#08f800 75px,#00f802 79px,#00f81b 85px,#00f855 93px,#00f9cb 107px,#00f9f1 114px,#00f7f9 118px,#00def9 124px,#00a3f9 132px,#002ef8 146px,#0008f8 153px,#0200f8 157px,#1b00f8 163px,#5500f8 171px,#ca00f8 185px,#f000f8 192px,#f800f6 196px,#f800dd 202px,#f800a3 210px,#f7002e 224px,#f60008 231px,#f50000 234px)"></i>
<i style="top:18px;background:linear-gradient(90deg,#f30000 0px,#f41500 6px,#f54c00 14px,#f7c900 29px,#f7ef00 36px,#f5f700 40px,#dcf700 46px,#a2f700 54px,#2ef700 68px,#08f700 75px,#00f702 79px,#00f71b 85px,#00f755 93px,#00f8ca 107px,#00f8f0 114px,#00f6f8 118px,#00ddf8 124px,#00a3f8 132px,#002ef7 146px,#0008f6 153px,#0200f6 157px,#1b00f6 163px,#5500f6 171px,#c900f7 185px,#ef00f7 192px,#f700f5 196px,#f700dc 202px,#f700a2 210px,#f5002e 224px,#f40008 231px,#f30000 234px)"></i>
<i style="top:21px;background:linear-gradient(90deg,#f10000 0px,#f31500 6px,#f44c00 14px,#f5c800 29px,#f6ee00 36px,#f4f600 40px,#dbf600 46px,#a2f600 54px,#2ef600 68px,#08f500 75px,#00f502 79px,#00f61b 85px,#00f655 93px,#00f7c9 107px,#00f7ef 114px,#00f5f7 118px,#00dcf7 124px,#00a2f7 132px,#002ef6 146px,#0008f5 153px,#0200f5 157px,#1b00f5 163px,#5400f5 171px,#c800f6 185px,#ee00f6 192px,#f600f4 196px,#f600db 202px,#f500a1 210px,#f4002d 224px,#f20008 231px,#f10000 234px)"></i>
<i style="top:24px;background:linear-gradient(90deg,#f00000 0px,#f11500 6px,#f24b00 14px,#f4c700 29px,#f5ed00 36px,#f3f500 40px,#daf500 46px,#a1f500 54px,#2ef400 68px,#08f400 75px,#00f402 79px,#00f41b 85px,#00f554 93px,#00f6c8 107px,#00f6ee 114px,#00f4f6 118px,#00dbf6 124px,#00a1f5 132px,#002ef4 146px,#0008f4 153px,#0200f4 157px,#1a00f4 163px,#5400f4 171px,#c700f4 185px,#ed00f5 192px,#f500f3 196px,#f400da 202px,#f40098 211px,#f2002d 224px,#f00008 231px,#f00000 234px)"></i>
<i style="top:27px;background:linear-gradient(90deg,#ee0000 0px,#ef1500 6px,#f14b00 14px,#f3c500 29px,#f4ec00 36px,#f2f400 40px,#d9f400 46px,#a0f400 54px,#2df300 68px,#08f300 75px,#00f302 79px,#00f31a 85px,#00f454 93px,#00f5c7 107px,#00f5ed 114px,#00f3f5 118px,#00daf5 124px,#0098f4 133px,#002df3 146px,#0008f3 153px,#0200f2 157px,#1a00f2 163px,#5300f2 171px,#c600f3 185px,#ec00f4 192px,#f400f2 196px,#f300d9 202px,#f30097 211px,#f0002d 224px,#ef0008 231px,#ee0000 234px)"></i>
<i style="top:30px;background:linear-gradient(90deg,#ec0000 0px,#ee1400 6px,#ef4a00 14px,#f2c400 29px,#f2eb00 36px,#f1f300 40px,#d8f300 46px,#97f300 55px,#2df200 68px,#08f100 75px,#00f102 79px,#00f21a 85px,#00f253 93px,#00f4c6 107px,#00f4ec 114px,#00f2f4 118px,#00d9f4 124px,#0097f3 133px,#002df2 146px,#0008f1 153px,#0200f1 157px,#1a00f1 163px,#5b00f1 172px,#c500f2 185px,#eb00f2 192px,#f200f1 196px,#f200d8 202px,#f10096 211px,#ef002d 224px,#ed0008 231px,#ec0000 234px)"></i>
<i style="top:33px;background:linear-gradient(90deg,#ea0000 0px,#ec1400 6px,#ee4a00 14px,#f0c300 29px,#f1ea00 36px,#f0f200 40px,#d7f200 46px,#96f100 55px,#2df100 68px,#08f000 75px,#00f002 79px,#00f11a 85px,#00f153 93px,#00f3c5 107px,#00f3eb 114px,#00f1f3 118px,#00d8f3 124px,#0097f2 133px,#002df1 146px,#0008f0 153px,#0200f0 157px,#1a00f0 163px,#5a00f0 172px,#c400f0 185px,#e900f1 192px,#f100ef 196px,#f100d7 202px,#f00095 211px,#ed002c 224px,#eb0007 231px,#ea0000 234px)"></i>
<i style="top:36px;background:linear-gradient(90deg,#e80000 0px,#ea1400 6px,#ec4900 14px,#efc200 29px,#f0e800 36px,#eff000 40px,#d6f000 46px,#95f000 55px,#2def00 68px,#08ef00 75px,#00ef02 79px,#00ef1a 85px,#00f053 93px,#00f1c4 107px,#00f2ea 114px,#00f0f2 118px,#00d8f2 124px,#0096f1 133px,#002def 146px,#0008ef 153px,#0200ee 157px,#1a00ee 163px,#5a00ee 172px,#c300ef 185px,#e800f0 192px,#f000ee 196px,#f000d5 202px,#ef0094 211px,#ec002c 224px,#ea0007 231px,#e80000 234px)"></i>
<i style="top:39px;background:linear-gradient(90deg,#e70000 0px,#e91400 6px,#eb4900 14px,#eec100 29px,#efe700 36px,#edef00 40px,#d5ef00 46px,#95ef00 55px,#2cee00 68px,#08ee00 75px,#00ed02 79px,#00ee1a 85px,#00ef52 93px,#00f0c4 107px,#00f1e9 114px,#00eff1 118px,#00d7f1 124px,#0095f0 133px,#002cee 146px,#0008ed 153px,#0200ed 157px,#1a00ed 163px,#5900ed 172px,#c200ee 185px,#e700ef 192px,#ef00ed 196px,#ee00d4 202px,#ed0094 211px,#ea002c 224px,#e80007 231px,#e70000 234px)"></i>
<i style="top:42px;background:linear-gradient(90deg,#e50000 0px,#e71400 6px,#e94800 14px,#ecc000 29px,#eee600 36px,#ecee00 40px,#d4ee00 46px,#94ee00 55px,#2ced00 68px,#08ec00 75px,#00ec02 79px,#00ed1a 85px,#00ee52 93px,#00efc3 107px,#00f0e8 114px,#00eef0 118px,#00d6f0 124px,#0094ef 133px,#002ced 146px,#0008ec 153px,#0200ec 157px,#1a00ec 163px,#5900ec 172px,#c000ed 185px,#e600ed 192px,#ee00ec 196px,#ed00d3 202px,#ec0093 211px,#e9002b 224px,#e60007 231px,#e50000 234px)"></i>
<i style="top:45px;background:linear-gradient(90deg,#e30000 0px,#e51400 6px,#e84800 14px,#ebbf00 29px,#ece500 36px,#ebed00 40px,#d3ed00 46px,#93ed00 55px,#2cec00 68px,#07eb00 75px,#00eb04 80px,#00ec1f 86px,#00ed62 95px,#00eec2 107px,#00efe7 114px,#00edef 118px,#00d5ef 124px,#0094ed 133px,#002cec 146px,#0007eb 153px,#0400ea 158px,#1f00ea 164px,#6900ea 174px,#c600ec 186px,#e500ec 192px,#ec00eb 196px,#ec00d2 202px,#eb0092 211px,#e7002b 224px,#e40007 231px,#e30000 234px)"></i>
<i style="top:48px;background:linear-gradient(90deg,#e10000 0px,#e41400 6px,#e64700 14px,#eabe00 29px,#ebe400 36px,#eaec00 40px,#d2ec00 46px,#93eb00 55px,#2cea00 68px,#07ea00 75px,#00ea04 80px,#00ea1f 86px,#00ec61 95px,#00edc1 107px,#00eee6 114px,#00ecee 118px,#00d4ee 124px,#0093ec 133px,#002cea 146px,#0007e9 153px,#0400e9 158px,#1f00e9 164px,#6800e9 174px,#c500ea 186px,#e400eb 192px,#eb00e9 196px,#eb00d1 202px,#e90091 211px,#e6002b 224px,#e30007 231px,#e10000 234px)"></i>
<i style="top:51px;background:linear-gradient(90deg,#df0000 0px,#e21300 6px,#e54700 14px,#e9bd00 29px,#eae300 36px,#e9eb00 40px,#d1ea00 46px,#92ea00 55px,#2ce900 68px,#07e800 75px,#00e804 80px,#00e91f 86px,#00ea69 96px,#00ecc7 108px,#00ede5 114px,#00ebed 118px,#00d3ed 124px,#0092eb 133px,#002ce9 146px,#0007e8 153px,#0400e8 158px,#2500e8 165px,#7800e8 176px,#c400e9 186px,#e600ea 193px,#ea00e6 197px,#e900c4 204px,#e70067 216px,#e40024 225px,#e10007 231px,#df0000 234px)"></i>
<i style="top:54px;background:linear-gradient(90deg,#de0000 0px,#e01300 6px,#e34600 14px,#e8c300 30px,#e9e500 37px,#e5e900 41px,#cae900 47px,#81e900 57px,#2be800 68px,#07e700 75px,#00e704 80px,#00e81f 86px,#00e968 96px,#00ebc6 108px,#00ece4 114px,#00eaec 118px,#00d2eb 124px,#0092ea 133px,#002be8 146px,#0007e7 153px,#0400e6 158px,#2500e6 165px,#7700e6 176px,#c300e8 186px,#e400e9 193px,#e900e4 197px,#e800c3 204px,#e60067 216px,#e20024 225px,#df0007 231px,#de0000 234px)"></i>
<i style="top:57px;background:linear-gradient(90deg,#dc0000 0px,#df1300 6px,#e24600 14px,#e6c200 30px,#e8e400 37px,#e4e800 41px,#c3e800 48px,#68e800 60px,#1fe700 70px,#04e600 76px,#00e607 81px,#00e72b 88px,#00eac5 108px,#00ebe3 114px,#00e9eb 118px,#00d1ea 124px,#0091e9 133px,#002be7 146px,#0007e5 153px,#0400e5 158px,#2400e5 165px,#7f00e5 177px,#c800e7 187px,#e300e8 193px,#e800e3 197px,#e700c2 204px,#e40066 216px,#e10024 225px,#dd0004 232px,#dc0000 234px)"></i>
<i style="top:60px;background:linear-gradient(90deg,#da0000 0px,#dd1300 6px,#e04600 14px,#e5c100 30px,#e7e200 37px,#e3e700 41px,#c2e700 48px,#67e600 60px,#1ee500 70px,#04e400 76px,#00e507 81px,#00e62b 88px,#00e9c4 108px,#00eae6 115px,#00e6ea 119px,#00c4e9 126px,#005fe7 139px,#001ee5 148px,#0004e4 154px,#0700e4 159px,#2a00e4 166px,#c100e5 186px,#e200e6 193px,#e600e2 197px,#e500c1 204px,#e3005d 217px,#df001e 226px,#db0004 232px,#da0000 234px)"></i>
<i style="top:63px;background:linear-gradient(90deg,#d80000 0px,#db1300 6px,#df4500 14px,#e4c000 30px,#e6e100 37px,#e2e600 41px,#c1e600 48px,#67e500 60px,#1ee400 70px,#04e300 76px,#00e307 81px,#00e52b 88px,#00e8c3 108px,#00e9e5 115px,#00e5e9 119px,#00c3e8 126px,#005fe6 139px,#001ee4 148px,#0004e3 154px,#0700e2 159px,#2a00e2 166px,#c000e4 186px,#e100e5 193px,#e500e1 197px,#e400c0 204px,#e1005d 217px,#dd001d 226px,#da0004 232px,#d80000 234px)"></i>
<i style="top:66px;background:linear-gradient(90deg,#d60000 0px,#da1300 6px,#dd4500 14px,#e3be00 30px,#e4e000 37px,#e1e500 41px,#c0e500 48px,#66e400 60px,#1ee300 70px,#04e200 76px,#00e207 81px,#00e32a 88px,#00e7c2 108px,#00e8e4 115px,#00e4e8 119px,#00c2e7 126px,#005ee4 139px,#001ee3 148px,#0004e1 154px,#0700e1 159px,#2a00e1 166px,#bf00e3 186px,#e000e4 193px,#e400e0 197px,#e300bf 204px,#e0005c 217px,#db001d 226px,#d80004 232px,#d60000 234px)"></i>
<i style="top:69px;background:linear-gradient(90deg,#d40404 0px,#d70a00 4px,#da2f00 11px,#e1bd00 30px,#e3df00 37px,#dfe400 41px,#bfe300 48px,#65e300 60px,#1ee100 70px,#04e100 76px,#00e107 81px,#00e22a 88px,#00e6c1 108px,#00e7e3 115px,#00e3e7 119px,#00c1e6 126px,#0056e3 140px,#0018e1 149px,#0002e0 155px,#0b00df 160px,#3000df 167px,#be00e2 186px,#df00e3 193px,#e300df 197px,#e200be 204px,#de005c 217px,#da001d 226px,#d60104 232px,#d40404 234px)"></i>
<i style="top:72px;background:linear-gradient(90deg,#d10707 0px,#d61200 6px,#da4400 14px,#e0bc00 30px,#e2de00 37px,#dee200 41px,#bee200 48px,#65e200 60px,#1ee000 70px,#04df00 76px,#00e007 81px,#00e12a 88px,#00e5c0 108px,#00e6e2 115px,#00e2e6 119px,#00c0e5 126px,#002ae1 146px,#0007df 153px,#0400de 158px,#2300de 165px,#7b00de 177px,#c300e0 187px,#dd00e2 193px,#e200dd 197px,#e000bd 204px,#dd005b 217px,#d8001d 226px,#d5010c 230px,#d10707 234px)"></i>
<i style="top:75px;background:linear-gradient(90deg,#cf0b0b 0px,#d31604 6px,#d72e00 11px,#dfbb00 30px,#e1dd00 37px,#dde100 41px,#bde100 48px,#64e000 60px,#1edf00 70px,#04de00 76px,#00de07 81px,#00e02a 88px,#00e4bf 108px,#00e5e1 115px,#00e1e5 119px,#00bfe4 126px,#002adf 146px,#0007de 153px,#0400dd 158px,#2300dd 165px,#7a00dd 177px,#c200df 187px,#dc00e0 193px,#e000dc 197px,#df00bc 204px,#db0053 218px,#d7001d 226px,#d1080c 232px,#cf0b0b 234px)"></i>
<i style="top:78px;background:linear-gradient(90deg,#cd0e0e 0px,#d11908 6px,#d73c00 13px,#ddba00 30px,#e0db00 37px,#dce000 41px,#bce000 48px,#64df00 60px,#1dde00 70px,#04dd00 76px,#00dd07 81px,#00de2a 88px,#00e3bf 108px,#00e4e0 115px,#00e0e4 119px,#00bfe3 126px,#0029de 146px,#0007dc 153px,#0400db 158px,#2300db 165px,#7a00dc 177px,#c000de 187px,#db00df 193px,#df00db 197px,#de00ba 204px,#da0052 218px,#d50223 225px,#cf0b0f 232px,#cd0e0e 234px)"></i>
<i style="top:81px;background:linear-gradient(90deg,#cc1010 0px,#d0200a 7px,#d64a01 15px,#dcb900 30px,#deda00 37px,#dbdf00 41px,#bbdf00 48px,#63de00 60px,#1ddc00 70px,#04db00 76px,#00dc07 81px,#00dd29 88px,#00e2be 108px,#00e3df 115px,#00dfe3 119px,#00bee2 126px,#0029dd 146px,#0007db 153px,#0400da 158px,#2300da 165px,#7900da 177px,#bf00dd 187px,#da00de 193px,#de00da 197px,#dc00b9 204px,#d50230 223px,#ce0c15 230px,#cc1010 234px)"></i>
<i style="top:84px;background:linear-gradient(90deg,#ca1313 0px,#ce220d 7px,#d34c05 15px,#d99600 25px,#dcc900 33px,#dede00 39px,#cbde00 45px,#99dd00 53px,#29dc00 68px,#07da00 75px,#00da04 80px,#00dc23 87px,#00de73 98px,#00e1c3 109px,#00e2de 115px,#00dee2 119px,#00bde0 126px,#0029dc 146px,#0007da 153px,#0400d9 158px,#2200d9 165px,#7800d9 177px,#be00db 187px,#d900dd 193px,#dd00d9 197px,#db00b8 204px,#d4033d 221px,#ce0d1d 228px,#ca1313 234px)"></i>
<i style="top:87px;background:linear-gradient(90deg,#c81616 0px,#cc2510 7px,#d14d09 15px,#d89500 25px,#dbc800 33px,#dddd00 39px,#c9dc00 45px,#98dc00 53px,#29da00 68px,#07d900 75px,#00d904 80px,#00db23 87px,#00dd72 98px,#00e0c2 109px,#00e1dd 115px,#00dde1 119px,#00bcdf 126px,#0029da 146px,#0007d8 153px,#0400d7 158px,#2200d7 165px,#7700d8 177px,#bd00da 187px,#da00dc 194px,#db00d1 199px,#d900a4 207px,#d50352 218px,#cd0e27 226px,#c91517 233px,#c81616 234px)"></i>
<i style="top:90px;background:linear-gradient(90deg,#c61919 0px,#ca2713 7px,#ce4f0c 15px,#d8a900 28px,#dad000 35px,#dadc00 40px,#c3db00 46px,#88db00 55px,#29d900 68px,#07d800 75px,#00d804 80px,#00d923 87px,#00dc72 98px,#00dfc1 109px,#00e0dc 115px,#00dce0 119px,#00bbde 126px,#0029d9 146px,#0007d7 153px,#0501d6 158px,#2201d6 165px,#7700d6 177px,#bc00d9 187px,#d900db 194px,#da00cf 199px,#d800a3 207px,#d40361 216px,#cc102e 225px,#c7171a 232px,#c61919 234px)"></i>
<i style="top:93px;background:linear-gradient(90deg,#c41b1b 0px,#c82916 7px,#cc500f 15px,#d8bb00 31px,#dad800 38px,#d0da00 43px,#abda00 50px,#28d800 68px,#07d600 75px,#00d707 81px,#00d828 88px,#00ddba 108px,#00dfdb 115px,#00dbdf 119px,#00badd 126px,#0028d8 146px,#010bd6 152px,#0f05d3 160px,#3805d3 168px,#bb00d8 187px,#d800d9 194px,#d900ce 199px,#d700a2 207px,#ce0d49 220px,#c81625 228px,#c41b1b 234px)"></i>
<i style="top:96px;background:linear-gradient(90deg,#c31e1e 0px,#c62c19 7px,#cb5812 16px,#d7c400 33px,#d9d900 39px,#c6d900 45px,#8ed900 54px,#28d700 68px,#0dd404 74px,#03d40d 82px,#00d722 87px,#00d971 98px,#00dcbf 109px,#00deda 115px,#00dade 119px,#00b9dc 126px,#0028d7 146px,#050fd3 152px,#0f09d0 159px,#2e09d0 166px,#9a04d4 182px,#c900d7 190px,#d800d8 195px,#d700c4 201px,#d1077e 212px,#ca1240 222px,#c51a23 230px,#c31e1e 234px)"></i>
<i style="top:99px;background:linear-gradient(90deg,#c12121 0px,#c42e1c 7px,#c95915 16px,#d6c800 34px,#d8d800 39px,#c5d800 45px,#8dd700 54px,#36d502 66px,#14d207 73px,#09d10c 80px,#03d424 87px,#00d751 94px,#00dbb8 108px,#00ddd9 115px,#00d9dd 119px,#00b8db 126px,#0330d5 145px,#0913d0 152px,#130dce 159px,#360dce 167px,#a607d2 184px,#d000d6 192px,#d700d5 196px,#d403bd 202px,#c91447 221px,#c41c27 229px,#c12121 234px)"></i>
<i style="top:102px;background:linear-gradient(90deg,#bf2323 0px,#c2301e 7px,#c75a18 16px,#d3c505 34px,#d7d700 39px,#c4d700 45px,#8dd600 54px,#39d207 66px,#18cf0b 73px,#0cce10 80px,#07d227 87px,#00d760 96px,#00dab7 108px,#00dcd8 115px,#00d8dc 119px,#00b7da 126px,#034bd4 141px,#0b20cf 149px,#1010cc 156px,#2510cc 163px,#5d10cc 173px,#bb08d1 188px,#d501d5 195px,#d108bb 202px,#c61843 222px,#c22028 230px,#bf2323 234px)"></i>
<i style="top:105px;background:linear-gradient(90deg,#be2626 0px,#c13221 7px,#c55b1b 16px,#d0c309 34px,#d5d502 39px,#c2d404 45px,#8cd305 54px,#36cf0b 67px,#18cc0f 74px,#0fcd18 82px,#0ad034 89px,#00d77e 100px,#00d9c2 110px,#00dbd9 116px,#00d0da 121px,#00a3d8 129px,#0461d3 138px,#0d2bce 147px,#1215cb 154px,#1f13ca 161px,#4c13ca 170px,#ba0bcf 188px,#d206d2 195px,#cf0bba 202px,#c41b45 222px,#c0222a 230px,#be2626 234px)"></i>
<i style="top:108px;background:linear-gradient(90deg,#bc2828 0px,#bf3524 7px,#c35c1d 16px,#cdbd0e 33px,#d2d207 39px,#bbd108 46px,#7ed00a 56px,#38cd0f 67px,#1bca13 74px,#12cb1b 82px,#0dce3c 90px,#00d79b 104px,#00d9cb 112px,#00dada 117px,#00c6d9 123px,#018dd6 132px,#0e3dcd 144px,#131fca 151px,#1a17c8 158px,#3817c8 166px,#b310cc 187px,#ce0bcf 194px,#ce0dc5 199px,#ca1391 209px,#c31e47 222px,#be252c 230px,#bc2828 234px)"></i>
<i style="top:111px;background:linear-gradient(90deg,#bb2b2b 0px,#be3a26 8px,#c2681f 18px,#cbbb12 33px,#cfcf0b 39px,#b9ce0c 46px,#78cd0e 57px,#35ca13 68px,#1cc816 75px,#15c921 83px,#10cc44 91px,#00d7ba 109px,#00d9d7 116px,#00ced8 121px,#00a8d6 128px,#1145cb 143px,#1622c8 151px,#1d1ac6 158px,#3a1ac6 166px,#b613ca 188px,#cd0ecd 195px,#ca13b6 202px,#c12148 222px,#bd282f 230px,#bb2b2b 234px)"></i>
<i style="top:114px;background:linear-gradient(90deg,#b92d2d 0px,#bc3c28 8px,#c06922 18px,#c9bd14 34px,#cbcc0f 40px,#b3cc10 47px,#37c816 68px,#1fc61a 75px,#18c724 83px,#13ca46 91px,#00d7c4 111px,#00d8d8 117px,#00c4d7 123px,#1541c9 144px,#1a22c5 152px,#251dc4 160px,#4b1dc4 169px,#b516c8 188px,#cb12cb 195px,#c816b5 202px,#bf244a 222px,#bb2a31 230px,#b92d2d 234px)"></i>
<i style="top:117px;background:linear-gradient(90deg,#b82f2f 0px,#ba3e2b 8px,#bf6924 18px,#c7bb18 34px,#c9ca13 40px,#b1c914 47px,#3ac61a 68px,#20c31d 76px,#1bc526 83px,#17c748 91px,#02d5c7 112px,#00d7d7 117px,#02c7d5 122px,#193ec6 145px,#1e23c3 153px,#2820c2 160px,#4d20c2 169px,#b319c6 188px,#c815c8 195px,#c619b3 202px,#bd264c 222px,#b92d33 230px,#b82f2f 234px)"></i>
<i style="top:120px;background:linear-gradient(90deg,#b63232 0px,#b9402d 8px,#bd6f27 19px,#c5ba1b 34px,#c6c816 40px,#b0c717 47px,#3cc31d 68px,#23c120 76px,#1ec229 83px,#1ac54a 91px,#07d1c4 112px,#00d6d6 117px,#0bb5cf 125px,#1c45c4 144px,#2028c1 152px,#2a23c0 160px,#4e23c0 169px,#b21dc4 188px,#c619c6 195px,#c31dad 203px,#bc294d 222px,#b82f36 230px,#b63232 234px)"></i>
<i style="top:123px;background:linear-gradient(90deg,#b43434 0px,#b74230 8px,#bb7029 19px,#c3b81e 34px,#c4c51a 40px,#aac51b 48px,#3ec120 68px,#26bf23 76px,#22c02c 83px,#1dc351 92px,#0ccec2 112px,#06d3d3 117px,#0fb3cc 125px,#1f47c2 144px,#232bbf 152px,#2d26be 160px,#5026be 169px,#b020c2 188px,#c41cc4 195px,#c120ac 203px,#b92d4b 223px,#b63236 231px,#b43434 234px)"></i>
<i style="top:126px;background:linear-gradient(90deg,#b33636 0px,#b64432 8px,#ba702c 19px,#c1b621 34px,#c2c31d 40px,#a8c31e 48px,#40bf23 68px,#29be26 76px,#25bf2f 83px,#20c152 92px,#10ccbf 112px,#0bcfcf 117px,#13b1ca 125px,#2344c0 145px,#272cbd 153px,#3229bc 161px,#5b29bc 171px,#af23c0 188px,#c21fc2 195px,#bf23ab 203px,#b82f4d 223px,#b43538 232px,#b33636 234px)"></i>
<i style="top:129px;background:linear-gradient(90deg,#b13939 0px,#b44635 8px,#b8762e 20px,#bfb425 34px,#c0c121 40px,#a7c121 48px,#42bd26 68px,#2cbc29 76px,#27bd34 84px,#23c059 93px,#14c9bd 112px,#0fcdcd 117px,#17b0c7 125px,#2646be 145px,#2a2fbb 153px,#352bba 161px,#612bba 172px,#ad26be 188px,#c023c0 195px,#bd26a9 203px,#b6324e 223px,#b2383a 232px,#b13939 234px)"></i>
<i style="top:132px;background:linear-gradient(90deg,#b03b3b 0px,#b34b37 9px,#b77f30 22px,#bdb627 35px,#bebf24 40px,#a6be25 48px,#41bb2a 69px,#2dba2c 77px,#2abb39 85px,#25be64 95px,#18c7bb 112px,#13caca 117px,#1baec5 125px,#2948bc 145px,#2d31b9 153px,#372eb8 161px,#622eb8 172px,#af28bc 189px,#bd26bc 196px,#bb2aa0 205px,#b43450 223px,#b13a3c 232px,#b03b3b 234px)"></i>
<i style="top:135px;background:linear-gradient(90deg,#ae3d3d 0px,#b14c39 9px,#b67f32 22px,#bbb42a 35px,#bcbd27 40px,#a5bc28 48px,#43b92d 69px,#30b82f 77px,#2db93c 85px,#28bc6a 96px,#1cc4b9 112px,#17c7c7 117px,#1eadc3 125px,#2c4aba 145px,#3034b7 153px,#3a31b6 161px,#6331b6 172px,#ae2cba 189px,#bb29ba 196px,#b92d9f 205px,#b33752 223px,#af3c3e 232px,#ae3d3d 234px)"></i>
<i style="top:138px;background:linear-gradient(90deg,#ad4040 0px,#b04e3c 9px,#b48434 23px,#b9b22d 35px,#b8bb2a 41px,#9bba2b 50px,#49b82f 68px,#34b632 76px,#30b73c 84px,#2cba61 94px,#20c2b7 112px,#1cc3c4 118px,#24a2bf 127px,#2f4cb8 145px,#3335b5 154px,#3f34b5 162px,#7234b5 175px,#ac2eb8 189px,#b92cb8 196px,#b7309e 205px,#b13953 223px,#ae3f41 232px,#ad4040 234px)"></i>
<i style="top:141px;background:linear-gradient(90deg,#ac4242 0px,#ae503e 9px,#b28437 23px,#b7b130 35px,#b6b92d 41px,#9ab82e 50px,#47b632 69px,#36b435 77px,#32b641 85px,#2eb86c 96px,#23bfb5 112px,#20c0c2 118px,#27a1bd 127px,#324eb6 145px,#3638b3 154px,#4136b3 162px,#7236b3 175px,#ae31b6 190px,#b82fb6 196px,#b5339d 205px,#af3c55 223px,#ac4143 232px,#ac4242 234px)"></i>
<i style="top:144px;background:linear-gradient(90deg,#aa4444 0px,#ac5240 9px,#b18839 24px,#b6b132 36px,#b2b731 42px,#91b631 52px,#49b435 69px,#38b238 77px,#35b443 85px,#31b66d 96px,#27bdb3 112px,#24bebf 118px,#2aa0bb 127px,#3450b4 145px,#383bb2 154px,#4339b1 162px,#7739b1 176px,#ac34b5 190px,#b632b5 196px,#b33698 206px,#ae3e56 223px,#ab4345 232px,#aa4444 234px)"></i>
<i style="top:147px;background:linear-gradient(90deg,#a94646 0px,#ab5343 9px,#b08c3b 25px,#b4b235 37px,#afb534 43px,#88b435 54px,#4bb238 69px,#3bb03b 78px,#37b24b 87px,#31b789 102px,#29bcb7 114px,#27bcbd 118px,#2e9fb9 127px,#384fb2 146px,#3b3cb0 155px,#4b3caf 164px,#ab37b3 190px,#b435b3 196px,#b13997 206px,#ac4155 224px,#a94647 233px,#a94646 234px)"></i>
<i style="top:150px;background:linear-gradient(90deg,#a74949 0px,#aa5845 10px,#b1ac39 35px,#b1b337 41px,#94b237 51px,#4eb03b 69px,#3daf3d 78px,#3ab04d 87px,#33b58d 103px,#2cbab5 114px,#2cb7ba 119px,#3391b5 130px,#3b51b0 146px,#3e3fae 155px,#4d3eae 164px,#a93ab1 190px,#b239af 197px,#af3c8f 208px,#aa4457 224px,#a74949 234px)"></i>
<i style="top:153px;background:linear-gradient(90deg,#a64b4b 0px,#a85947 10px,#b0aa3c 35px,#afb13a 41px,#93b03a 51px,#50ae3e 69px,#40ad40 78px,#3daf4f 87px,#36b390 104px,#2fb8b5 115px,#30b3b7 120px,#3788b3 132px,#3e50ae 147px,#4141ac 156px,#5541ac 166px,#a73daf 190px,#b03cae 197px,#ad3f8f 208px,#a94659 224px,#a64b4b 234px)"></i>
<i style="top:156px;background:linear-gradient(90deg,#a44d4d 0px,#a75b4a 10px,#aeaa3e 36px,#abaf3d 42px,#8bae3d 53px,#4fac41 70px,#42ab43 79px,#3fad57 89px,#34b5af 113px,#32b5b6 118px,#3898b2 128px,#4054ad 146px,#4344ab 155px,#5144aa 164px,#a63fad 190px,#ae3eac 197px,#ab428b 209px,#a74958 225px,#a44d4d 234px)"></i>
<i style="top:159px;background:linear-gradient(90deg,#a34f4f 0px,#a55d4c 10px,#aca941 36px,#a8ad40 43px,#84ad40 55px,#51ab43 70px,#45aa46 79px,#42ab59 89px,#37b2ad 113px,#35b3b4 118px,#3c93b0 129px,#4356ab 146px,#4647a9 155px,#5646a9 165px,#a442ab 190px,#ac41aa 197px,#aa458a 209px,#a54b5a 225px,#a34f4f 234px)"></i>
<i style="top:162px;background:linear-gradient(90deg,#a25151 0px,#a4604e 11px,#aaa744 36px,#a6ab42 43px,#80ab43 56px,#51a946 71px,#47a84a 81px,#44aa64 92px,#3ab0ab 113px,#39afb1 119px,#408bad 131px,#4656a9 147px,#4949a7 156px,#5a49a7 166px,#a345aa 190px,#aa44a8 197px,#a8478a 209px,#a44e5b 225px,#a25151 234px)"></i>
<i style="top:165px;background:linear-gradient(90deg,#a05353 0px,#a26250 11px,#a9a547 36px,#a5a945 43px,#80a946 56px,#53a749 71px,#4aa64d 81px,#47a865 92px,#3eaea9 113px,#3dadaf 119px,#4387ab 132px,#4955a7 148px,#4c4ba5 157px,#624ba5 168px,#a148a8 190px,#a847a7 197px,#a64a87 210px,#a2505b 226px,#a05353 234px)"></i>
<i style="top:168px;background:linear-gradient(90deg,#9f5656 0px,#a16352 11px,#a7a449 36px,#a1a748 44px,#73a749 60px,#52a54c 73px,#4ca553 84px,#48a879 98px,#40aca9 114px,#40a9ac 120px,#4879a8 136px,#4c56a5 149px,#514ea4 159px,#6e4ea4 172px,#a24aa6 191px,#a64aa2 199px,#a1535d 226px,#9f5656 234px)"></i>
<i style="top:171px;background:linear-gradient(90deg,#9d5858 0px,#9f6754 12px,#a5a24c 36px,#a0a64b 44px,#6ea54d 62px,#53a34f 74px,#4ea457 85px,#49a783 101px,#43aba9 115px,#45a3aa 122px,#4e5aa3 148px,#5251a2 158px,#6d51a2 171px,#a04da4 191px,#a44da0 199px,#9f555f 226px,#9d5858 234px)"></i>
<i style="top:174px;background:linear-gradient(90deg,#9c5a5a 0px,#9e6857 12px,#a3a04f 36px,#9ea44e 44px,#58a251 72px,#51a258 84px,#4da47d 99px,#47a8a5 114px,#47a5a8 120px,#515aa2 149px,#5753a0 160px,#7b53a0 176px,#a04fa3 192px,#a2509d 200px,#9e5761 226px,#9c5a5a 234px)"></i>
<i style="top:177px;background:linear-gradient(90deg,#9b5c5c 0px,#9d6a59 12px,#a2a051 37px,#99a251 46px,#5aa054 72px,#53a05c 85px,#4ea48c 104px,#49a7a6 116px,#4d97a5 126px,#545ea0 148px,#58569f 159px,#76569f 174px,#9f52a1 192px,#a1539a 201px,#9c5a62 226px,#9b5c5c 234px)"></i>
<i style="top:180px;background:linear-gradient(90deg,#995e5e 0px,#9b6d5b 13px,#a09e54 37px,#96a054 47px,#5d9e56 72px,#569f5e 85px,#50a290 106px,#4ca5a5 117px,#518ba2 130px,#565e9e 149px,#5d589d 161px,#9d559f 192px,#9f5599 201px,#9b5c63 227px,#995e5e 234px)"></i>
<i style="top:183px;background:linear-gradient(90deg,#986060 0px,#9a6e5d 13px,#9e9d57 37px,#959e56 47px,#5f9d59 72px,#599d60 85px,#50a2a1 115px,#5299a1 124px,#59609d 149px,#605b9c 162px,#9b579e 192px,#9d5896 202px,#995e65 227px,#986060 234px)"></i>
<i style="top:186px;background:linear-gradient(90deg,#976262 0px,#98715f 14px,#9c9b59 37px,#929c59 48px,#619b5c 72px,#5b9b64 86px,#53a09f 115px,#55979f 124px,#5c629b 149px,#645d9a 163px,#9a5a9c 192px,#9b5b94 202px,#986167 227px,#976262 234px)"></i>
<i style="top:189px;background:linear-gradient(90deg,#956464 0px,#977462 15px,#9b9a5c 38px,#8d9b5c 50px,#63995e 72px,#5e9a66 86px,#569e9d 115px,#58949d 125px,#5e6599 149px,#675f98 164px,#995d9a 193px,#995e8e 205px,#966368 227px,#956464 234px)"></i>
<i style="top:192px;background:linear-gradient(90deg,#946767 0px,#967564 15px,#99985f 38px,#8b995f 51px,#649861 73px,#609869 87px,#5a9c9b 115px,#5c919b 126px,#616697 150px,#696297 164px,#975f98 193px,#98618c 206px,#956569 228px,#946767 234px)"></i>
<i style="top:195px;background:linear-gradient(90deg,#926969 0px,#947766 16px,#979761 38px,#889761 52px,#679663 73px,#62966c 88px,#5c9a9a 116px,#608998 130px,#646796 151px,#6d6495 166px,#966297 193px,#96638b 206px,#93676b 228px,#926969 234px)"></i>
<i style="top:198px;background:linear-gradient(90deg,#916b6b 0px,#937a68 17px,#969664 39px,#819564 56px,#679466 75px,#659571 90px,#5f9898 116px,#638696 131px,#666994 151px,#6f6794 166px,#956495 194px,#946684 210px,#926a6c 230px,#916b6b 234px)"></i>
<i style="top:201px;background:linear-gradient(90deg,#906d6d 0px,#917c6a 18px,#949466 39px,#809467 57px,#699269 76px,#679375 92px,#639696 116px,#668494 132px,#696b92 152px,#736992 168px,#936793 194px,#926981 212px,#906c6d 231px,#906d6d 234px)"></i>
<i style="top:204px;background:linear-gradient(90deg,#8e6f6f 0px,#907f6c 20px,#929269 40px,#6c916b 76px,#6a9277 93px,#659595 117px,#6b6c91 153px,#776c91 170px,#926a92 195px,#8f6e6f 231px,#8e6f6f 234px)"></i>
<i style="top:207px;background:linear-gradient(90deg,#8d7171 0px,#8f816e 22px,#90906c 41px,#6e8f6e 77px,#6c907c 96px,#689393 117px,#6e6e8f 154px,#7d6e8f 174px,#906c90 196px,#8d7171 232px,#8d7171 234px)"></i>
<i style="top:210px;background:linear-gradient(90deg,#8c7373 0px,#8d8370 24px,#8d8f6e 43px,#708e70 77px,#6e8f7f 98px,#6c9090 118px,#70718e 154px,#7f708d 176px,#8e6f8e 197px,#8c7373 232px,#8c7373 234px)"></i>
<i style="top:213px;background:linear-gradient(90deg,#8a7575 0px,#8c8972 31px,#878d71 50px,#728c72 78px,#708d85 104px,#6f8d8e 121px,#73738c 155px,#8d728c 198px,#8b7575 233px,#8a7575 234px)"></i>
<i style="top:216px;background:linear-gradient(90deg,#897777 0px,#8a8b74 44px,#758b75 79px,#728c8c 120px,#75758a 156px,#8b748a 198px,#897777 234px)"></i>
<i style="top:219px;background:linear-gradient(90deg,#887979 0px,#878a76 46px,#778978 81px,#75898a 121px,#787789 158px,#897788 200px,#887979 234px)"></i>
<i style="top:222px;background:linear-gradient(90deg,#877b7b 0px,#858879 49px,#79887b 85px,#788788 123px,#7a7a87 160px,#887986 202px,#877b7b 234px)"></i>
<i style="top:225px;background:linear-gradient(90deg,#857d7d 0px,#83867c 54px,#7b8682 100px,#7b8186 135px,#837c86 183px,#857d7d 234px)"></i>
<i style="top:228px;background:linear-gradient(90deg,#847f7f 0px,#80847e 65px,#7e8184 138px,#847f80 222px,#847f7f 234px)"></i>
<i style="top:231px;background:linear-gradient(90deg,#838181 0px,#838181 234px)"></i></div>
<!-- zoom checkbox -->
<div class="s" style="left:553px;top:298px;width:13px;height:13px;padding:0"></div>
<div class="t" style="left:571px;top:299px;line-height:13px">Zoom</div>
<div class="b" style="left:553px;top:316px;width:48px;height:20px;line-height:18px">Z-Out</div>
<!-- button group -->
<div class="a" style="left:616px;top:290px;width:175px;height:28px;box-sizing:border-box;background:#808080;border:1px solid #000"></div>
<div class="b" style="left:622px;top:295px;width:39px;height:20px;line-height:18px">Inp</div>
<div class="b" style="left:665px;top:295px;width:38px;height:20px;line-height:18px">I&gt;M</div>
<div class="b" style="left:707px;top:295px;width:39px;height:20px;line-height:18px">Outp</div>
<div class="b y bold" style="left:750px;top:295px;width:38px;height:20px;line-height:18px">O&gt;M</div>
<div class="t" style="left:630px;top:323px;line-height:13px">Black Pt. Comp.</div>
<div class="s" style="left:709px;top:319px;width:81px;height:20px;line-height:20px">Both<u></u></div>
<!-- plot type select -->
<div class="a" style="left:553px;top:341px;width:240px;height:27px;box-sizing:border-box;background:#808080;border:1px solid #000"></div>
<div class="s" style="left:556px;top:343px;width:233px;height:21px;line-height:21px;font-weight:bold;letter-spacing:0">xy Chromaticity (Saturation map)<u></u></div>
<!-- options panel -->
<div class="fr" style="left:553px;top:369px;width:240px;height:159px"></div>
<div class="b dis" style="left:559px;top:375px;width:79px;height:23px;line-height:21px">Reset scale</div>
<div class="b dis" style="left:642px;top:375px;width:76px;height:23px;line-height:21px">Reset view</div>
<div class="b dis" style="left:723px;top:375px;width:66px;height:23px;line-height:21px">Top view</div>
<div class="s" style="left:558px;top:404px;width:13px;height:13px;padding:0"></div>
<svg class="a" style="left:560px;top:407px" width="9" height="9" viewBox="0 0 9 9"><path d="M1 3.5L3.5 6L8 1.5" stroke="#000" stroke-width="1.8" fill="none"/></svg>
<div class="t" style="left:576px;top:404px;line-height:14px">Wavelth</div>
<div class="s" style="left:627px;top:401px;width:163px;height:20px;line-height:20px">Normal/gamut boundaries<u></u></div>
<div class="fr" style="left:553px;top:468px;width:87px;height:30px"></div>
<div class="fr" style="left:553px;top:497px;width:240px;height:1px;border-width:1px 0 0 0"></div>
<div class="b bold" style="left:558px;top:473px;width:78px;height:21px;line-height:18px;font-size:12px">Print Test</div>
<div class="a" style="left:558px;top:503px;width:231px;height:19px;box-sizing:border-box;border:1px solid;border-color:#808080 #fff #fff #808080;box-shadow:inset 1px 1px 0 #a8a8a8;text-align:center;line-height:16px">not selected</div>
<!-- Display A -->
<div class="fr" style="left:559px;top:532px;width:144px;height:56px"></div>
<div class="t" style="left:569px;top:538px;font-weight:bold;letter-spacing:0;font-size:11.5px;line-height:14px">Display A</div>
<div class="b bold" style="left:650px;top:536px;width:48px;height:23px;line-height:21px;font-size:11.5px">View</div>
<div class="s" style="left:563px;top:562px;width:39px;height:20px;line-height:20px">1<u></u></div>
<div class="t" style="left:611px;top:565px;line-height:14px;word-spacing:3px">IN OUT</div>
<div class="s" style="left:659px;top:562px;width:39px;height:20px;line-height:20px">3<u></u></div>
<!-- Display B -->
<div class="fr" style="left:559px;top:592px;width:144px;height:56px"></div>
<div class="t" style="left:569px;top:598px;font-weight:bold;letter-spacing:0;font-size:11.5px;line-height:14px">Display B</div>
<div class="b bold" style="left:651px;top:597px;width:47px;height:23px;line-height:21px;font-size:11.5px">View</div>
<div class="s" style="left:563px;top:622px;width:39px;height:20px;line-height:20px">2<u></u></div>
<div class="t" style="left:610px;top:625px;line-height:14px;word-spacing:4px">IN OUT</div>
<div class="s" style="left:660px;top:622px;width:39px;height:20px;line-height:20px">4<u></u></div>
<div class="b" style="left:720px;top:532px;width:69px;height:22px;line-height:21px">Help</div>
<div class="b" style="left:720px;top:564px;width:69px;height:22px;line-height:21px">Exit</div>
<!-- logo -->
<svg class="a" style="left:709px;top:596px" width="80" height="48" viewBox="0 0 80 48">
<defs><linearGradient id="lb" x1="0" x2="1" y1="0" y2="0"><stop offset="0" stop-color="#000058"/><stop offset="1" stop-color="#0000c8"/></linearGradient>
<linearGradient id="lg" x1="0" x2="1" y1="0" y2="0"><stop offset="0" stop-color="#002000"/><stop offset=".5" stop-color="#005800"/><stop offset="1" stop-color="#008800"/></linearGradient></defs>
<rect width="80" height="48" fill="url(#lb)"/>
<path d="M0 0L80 11V31.200Z" fill="#fff"/>
<path d="M0 0H80V11.3Z" fill="url(#lg)"/>
<path d="M0 0L80 17.6V23.5Z" fill="#c83000"/>
<path d="M0 0L80 27V29Z" fill="#a000a0"/>
<path d="M4 9.5C5.5 6 8 6.5 11 8.5L31.5 20L10.5 28C6 24 3 16 4 9.500Z" fill="#ffffc0"/>
<text x="40.700" y="44.200" text-anchor="middle" font-family="Liberation Serif, serif" font-style="italic" font-size="17.500" fill="#fff" textLength="76" lengthAdjust="spacingAndGlyphs">Gamutvision</text>
</svg>

<div class="t" style="left:9px;top:578px;font-weight:bold;letter-spacing:0;font-size:12px;line-height:14px">1</div>
<div class="t" style="left:9px;top:629px;font-weight:bold;letter-spacing:0;font-size:12px;line-height:14px">2</div>
<div class="t" style="left:536px;top:578px;font-weight:bold;letter-spacing:0;font-size:12px;line-height:14px">3</div>
<div class="t" style="left:536px;top:630px;font-weight:bold;letter-spacing:0;font-size:12px;line-height:14px">4</div>
<div class="s" style="left:20px;top:575px;width:253px;height:20px;line-height:20px;background:#ffffc8">*sRGB &nbsp; (IEC6 1996-2.1 sRGB)<u></u></div>
<div class="s" style="left:20px;top:627px;width:253px;height:20px;line-height:20px;background:#e4ffe4">Acer Predator XB273UGS_100cd_6500k_gamm<u></u></div>
<div class="s" style="left:278px;top:575px;width:253px;height:20px;line-height:20px;background:#f0f0f0">Browse...<u></u></div>
<div class="s" style="left:278px;top:627px;width:253px;height:20px;line-height:20px;background:#f0f0f0">Browse...<u></u></div>
<div class="a" style="left:20px;top:596px;width:223px;height:31px;background:#4a7ccc;border-left:1px solid #111;box-sizing:border-box"></div>
<div class="b y bold" style="left:25px;top:601px;width:47px;height:24px;line-height:22px;font-size:11.5px">View</div>
<div class="s" style="left:95px;top:601px;width:141px;height:20px;line-height:20px">None (or Print Test)<u></u></div>
<div class="t" style="left:250px;top:604px;line-height:14px">Rendering</div>
<div class="a" style="left:308px;top:596px;width:222px;height:31px;background:#808080;border-right:1px solid #111;box-sizing:border-box"></div>
<div class="s" style="left:312px;top:601px;width:141px;height:20px;line-height:20px;background:#f0f0f0">Absolute<u></u></div>
<div class="b bold" style="left:479px;top:601px;width:48px;height:23px;line-height:20px;font-size:11.5px">View</div>
<svg class="a" style="left:6px;top:598px" width="12" height="27" viewBox="0 0 12 27"><rect width="12" height="27" fill="#e2e2e2"/><rect x="4.500" y="0" width="3.500" height="20" fill="#5a5a5a"/><path d="M1.500 19.500H10.800L6.200 25.800Z" fill="#505050"/></svg>
<svg class="a" style="left:533px;top:598px" width="12" height="27" viewBox="0 0 12 27"><rect width="12" height="27" fill="#e2e2e2"/><rect x="4" y="0" width="3.800" height="20" fill="#5a5a5a"/><path d="M1.500 19.500H10.800L6.200 25.800Z" fill="#505050"/></svg>

</body></html>
